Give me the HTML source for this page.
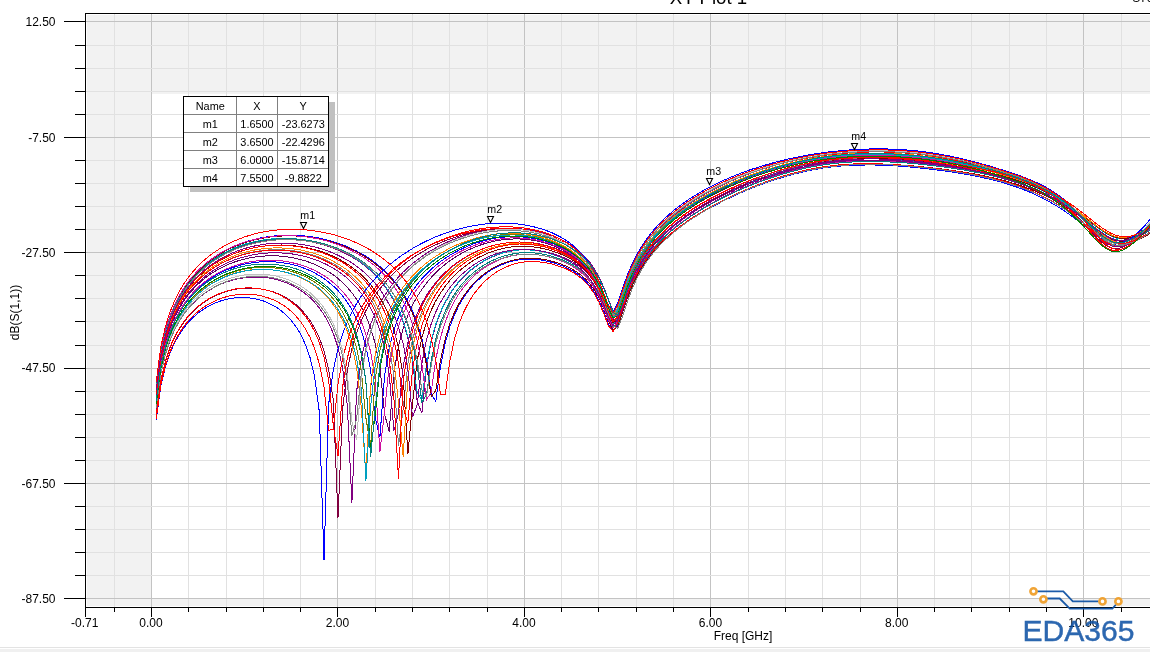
<!DOCTYPE html>
<html><head><meta charset="utf-8"><title>XY Plot 1</title>
<style>
html,body{margin:0;padding:0;background:#fff;}
body{width:1150px;height:652px;overflow:hidden;position:relative;font-family:"Liberation Sans",sans-serif;}
svg{position:absolute;left:0;top:0;display:block;will-change:transform}
svg text{font-family:"Liberation Sans",sans-serif;font-size:12px;fill:#000}
.curves polyline{fill:none;stroke-width:1;shape-rendering:crispEdges}
.mkw{will-change:transform;position:absolute;left:183px;top:96px;width:144px;height:89px;border:1px solid #000;background:#fff;box-shadow:6.5px 5.5px 0 -0.5px #c0c0c0;}
table.mk{border-collapse:collapse;font-size:10.9px;border-style:hidden;width:144px;height:89px;table-layout:fixed}
table.mk td{border:1px solid #808080;padding:0 0 0 1px;text-align:center;line-height:16px;height:17px;white-space:nowrap;overflow:visible}
</style></head><body>
<svg width="1150" height="652" viewBox="0 0 1150 652">
<rect x="0" y="0" width="1150" height="652" fill="#fff"/>
<rect x="87" y="15" width="1063" height="591" fill="#F2F2F2"/>
<rect x="152" y="94" width="998" height="504.5" fill="#fff"/>
<g shape-rendering="crispEdges">
<rect x="114" y="14" width="1" height="593" fill="#E1E1E1"/>
<rect x="151" y="14" width="1" height="593" fill="#C3C3C3"/>
<rect x="188" y="14" width="1" height="593" fill="#E1E1E1"/>
<rect x="226" y="14" width="1" height="593" fill="#E1E1E1"/>
<rect x="263" y="14" width="1" height="593" fill="#E1E1E1"/>
<rect x="300" y="14" width="1" height="593" fill="#E1E1E1"/>
<rect x="337" y="14" width="1" height="593" fill="#C3C3C3"/>
<rect x="375" y="14" width="1" height="593" fill="#E1E1E1"/>
<rect x="412" y="14" width="1" height="593" fill="#E1E1E1"/>
<rect x="449" y="14" width="1" height="593" fill="#E1E1E1"/>
<rect x="487" y="14" width="1" height="593" fill="#E1E1E1"/>
<rect x="524" y="14" width="1" height="593" fill="#C3C3C3"/>
<rect x="561" y="14" width="1" height="593" fill="#E1E1E1"/>
<rect x="598" y="14" width="1" height="593" fill="#E1E1E1"/>
<rect x="636" y="14" width="1" height="593" fill="#E1E1E1"/>
<rect x="673" y="14" width="1" height="593" fill="#E1E1E1"/>
<rect x="710" y="14" width="1" height="593" fill="#C3C3C3"/>
<rect x="748" y="14" width="1" height="593" fill="#E1E1E1"/>
<rect x="785" y="14" width="1" height="593" fill="#E1E1E1"/>
<rect x="822" y="14" width="1" height="593" fill="#E1E1E1"/>
<rect x="860" y="14" width="1" height="593" fill="#E1E1E1"/>
<rect x="897" y="14" width="1" height="593" fill="#C3C3C3"/>
<rect x="934" y="14" width="1" height="593" fill="#E1E1E1"/>
<rect x="971" y="14" width="1" height="593" fill="#E1E1E1"/>
<rect x="1009" y="14" width="1" height="593" fill="#E1E1E1"/>
<rect x="1046" y="14" width="1" height="593" fill="#E1E1E1"/>
<rect x="1083" y="14" width="1" height="593" fill="#C3C3C3"/>
<rect x="1121" y="14" width="1" height="593" fill="#E1E1E1"/>
<rect x="86" y="21" width="1065" height="1" fill="#C3C3C3"/>
<rect x="86" y="45" width="1065" height="1" fill="#E1E1E1"/>
<rect x="86" y="68" width="1065" height="1" fill="#E1E1E1"/>
<rect x="86" y="91" width="1065" height="1" fill="#E1E1E1"/>
<rect x="86" y="114" width="1065" height="1" fill="#E1E1E1"/>
<rect x="86" y="137" width="1065" height="1" fill="#C3C3C3"/>
<rect x="86" y="160" width="1065" height="1" fill="#E1E1E1"/>
<rect x="86" y="183" width="1065" height="1" fill="#E1E1E1"/>
<rect x="86" y="206" width="1065" height="1" fill="#E1E1E1"/>
<rect x="86" y="229" width="1065" height="1" fill="#E1E1E1"/>
<rect x="86" y="252" width="1065" height="1" fill="#C3C3C3"/>
<rect x="86" y="275" width="1065" height="1" fill="#E1E1E1"/>
<rect x="86" y="298" width="1065" height="1" fill="#E1E1E1"/>
<rect x="86" y="321" width="1065" height="1" fill="#E1E1E1"/>
<rect x="86" y="345" width="1065" height="1" fill="#E1E1E1"/>
<rect x="86" y="368" width="1065" height="1" fill="#C3C3C3"/>
<rect x="86" y="391" width="1065" height="1" fill="#E1E1E1"/>
<rect x="86" y="414" width="1065" height="1" fill="#E1E1E1"/>
<rect x="86" y="437" width="1065" height="1" fill="#E1E1E1"/>
<rect x="86" y="460" width="1065" height="1" fill="#E1E1E1"/>
<rect x="86" y="483" width="1065" height="1" fill="#C3C3C3"/>
<rect x="86" y="506" width="1065" height="1" fill="#E1E1E1"/>
<rect x="86" y="529" width="1065" height="1" fill="#E1E1E1"/>
<rect x="86" y="552" width="1065" height="1" fill="#E1E1E1"/>
<rect x="86" y="575" width="1065" height="1" fill="#E1E1E1"/>
<rect x="86" y="598" width="1065" height="1" fill="#C3C3C3"/>
</g>
<g class="curves">
<polyline points="156.2,400.5 160.8,365.8 165.5,345.7 170.1,331.5 174.8,320.6 179.5,311.8 184.1,304.5 188.8,298.3 193.5,293.0 198.1,288.3 202.8,284.3 207.4,280.7 212.1,277.5 216.8,274.7 221.4,272.3 226.1,270.1 230.7,268.3 235.4,266.7 240.1,265.3 244.7,264.1 249.4,263.2 254.0,262.5 258.7,262.0 263.4,261.7 268.0,261.7 272.7,261.8 277.4,262.1 282.0,262.6 286.7,263.4 291.3,264.3 296.0,265.5 300.7,267.0 305.3,268.7 310.0,270.6 314.6,272.9 319.3,275.6 324.0,278.6 328.6,282.1 333.3,286.0 338.0,290.6 342.6,295.9 347.3,302.2 351.9,309.7 356.6,318.8 361.3,330.5 365.9,346.2 370.6,369.9 375.2,418.1 379.9,437.2 384.6,375.3 389.2,348.1 393.9,330.3 398.5,317.2 403.2,306.8 407.9,298.1 412.5,290.8 417.2,284.4 421.9,278.8 426.5,273.8 431.2,269.3 435.8,265.2 440.5,261.6 445.2,258.3 449.8,255.3 454.5,252.6 459.1,250.1 463.8,247.9 468.5,245.9 473.1,244.1 477.8,242.5 482.5,241.1 487.1,239.9 491.8,238.9 496.4,238.0 501.1,237.4 505.8,236.9 510.4,236.7 515.1,236.6 519.7,236.7 524.4,237.1 529.1,237.6 533.7,238.4 538.4,239.3 543.0,240.5 547.7,241.9 552.4,243.5 557.0,245.4 561.7,247.5 566.4,250.0 571.0,252.8 575.7,256.2 580.3,260.1 585.0,264.8 589.7,270.4 594.3,277.4 599.0,286.1 603.6,296.9 608.3,309.5 613.0,318.4 617.6,313.2 622.3,299.1 627.0,285.4 631.6,273.9 636.3,264.3 640.9,256.1 645.6,249.0 650.3,242.8 654.9,237.2 659.6,232.2 664.2,227.6 668.9,223.3 673.6,219.4 678.2,215.7 682.9,212.3 687.5,209.0 692.2,206.0 696.9,203.0 701.5,200.3 706.2,197.6 710.9,195.1 715.5,192.6 720.2,190.3 724.8,188.1 729.5,185.9 734.2,183.9 738.8,181.9 743.5,180.0 748.1,178.2 752.8,176.4 757.5,174.8 762.1,173.2 766.8,171.6 771.5,170.2 776.1,168.8 780.8,167.5 785.4,166.2 790.1,165.0 794.8,163.9 799.4,162.8 804.1,161.8 808.7,160.9 813.4,160.1 818.1,159.3 822.7,158.6 827.4,157.9 832.0,157.3 836.7,156.8 841.4,156.4 846.0,156.0 850.7,155.7 855.4,155.4 860.0,155.2 864.7,155.1 869.3,155.0 874.0,155.0 878.7,155.0 883.3,155.1 888.0,155.3 892.6,155.5 897.3,155.7 902.0,156.0 906.6,156.3 911.3,156.7 916.0,157.2 920.6,157.7 925.3,158.2 929.9,158.8 934.6,159.4 939.3,160.1 943.9,160.8 948.6,161.5 953.2,162.4 957.9,163.2 962.6,164.1 967.2,165.1 971.9,166.1 976.6,167.1 981.2,168.2 985.9,169.3 990.5,170.5 995.2,171.8 999.9,173.1 1004.5,174.5 1009.2,175.9 1013.8,177.4 1018.5,178.9 1023.2,180.6 1027.8,182.3 1032.5,184.2 1037.1,186.3 1041.8,188.5 1046.5,190.9 1051.1,193.4 1055.8,196.2 1060.5,199.2 1065.1,202.5 1069.8,206.0 1074.4,209.8 1079.1,213.8 1083.8,218.0 1088.4,222.3 1093.1,226.8 1097.7,231.1 1102.4,235.0 1107.1,238.4 1111.7,241.0 1116.4,242.6 1121.1,243.1 1125.7,242.5 1130.4,241.0 1135.0,238.6 1139.7,235.4 1144.4,231.7 1149.0,227.4 1153.7,222.7 1158.3,217.9" stroke="#0000FF"/>
<polyline points="156.2,396.8 160.8,362.1 165.5,341.9 170.1,327.7 174.8,316.7 179.5,307.8 184.1,300.5 188.8,294.2 193.5,288.8 198.1,284.1 202.8,279.9 207.4,276.3 212.1,273.0 216.8,270.2 221.4,267.6 226.1,265.4 230.7,263.4 235.4,261.7 240.1,260.2 244.7,259.0 249.4,257.9 254.0,257.1 258.7,256.5 263.4,256.1 268.0,255.8 272.7,255.8 277.4,255.9 282.0,256.2 286.7,256.8 291.3,257.5 296.0,258.4 300.7,259.6 305.3,260.9 310.0,262.5 314.6,264.4 319.3,266.5 324.0,269.0 328.6,271.8 333.3,274.9 338.0,278.5 342.6,282.6 347.3,287.3 351.9,292.8 356.6,299.2 361.3,306.8 365.9,316.0 370.6,327.8 375.2,343.6 379.9,367.3 384.6,414.1 389.2,431.5 393.9,372.9 398.5,345.9 403.2,328.4 407.9,315.4 412.5,305.0 417.2,296.5 421.9,289.3 426.5,283.0 431.2,277.5 435.8,272.6 440.5,268.2 445.2,264.3 449.8,260.8 454.5,257.6 459.1,254.8 463.8,252.2 468.5,249.9 473.1,247.8 477.8,246.0 482.5,244.3 487.1,243.0 491.8,241.8 496.4,240.8 501.1,240.0 505.8,239.4 510.4,239.1 515.1,238.9 519.7,239.0 524.4,239.2 529.1,239.7 533.7,240.4 538.4,241.4 543.0,242.5 547.7,243.9 552.4,245.5 557.0,247.3 561.7,249.5 566.4,251.9 571.0,254.7 575.7,258.0 580.3,261.9 585.0,266.6 589.7,272.4 594.3,279.4 599.0,288.2 603.6,299.2 608.3,311.8 613.0,319.7 617.6,312.8 622.3,298.5 627.0,285.1 631.6,273.8 636.3,264.3 640.9,256.3 645.6,249.3 650.3,243.2 654.9,237.7 659.6,232.7 664.2,228.2 668.9,224.0 673.6,220.1 678.2,216.5 682.9,213.1 687.5,209.9 692.2,206.8 696.9,203.9 701.5,201.1 706.2,198.5 710.9,195.9 715.5,193.5 720.2,191.2 724.8,188.9 729.5,186.8 734.2,184.7 738.8,182.7 743.5,180.8 748.1,179.0 752.8,177.2 757.5,175.5 762.1,173.9 766.8,172.4 771.5,170.9 776.1,169.5 780.8,168.2 785.4,166.9 790.1,165.7 794.8,164.5 799.4,163.5 804.1,162.5 808.7,161.6 813.4,160.7 818.1,159.9 822.7,159.2 827.4,158.6 832.0,158.0 836.7,157.5 841.4,157.1 846.0,156.7 850.7,156.4 855.4,156.2 860.0,156.0 864.7,155.9 869.3,155.8 874.0,155.8 878.7,155.9 883.3,156.0 888.0,156.2 892.6,156.4 897.3,156.6 902.0,157.0 906.6,157.3 911.3,157.7 916.0,158.2 920.6,158.7 925.3,159.2 929.9,159.8 934.6,160.4 939.3,161.1 943.9,161.8 948.6,162.6 953.2,163.4 957.9,164.3 962.6,165.2 967.2,166.1 971.9,167.1 976.6,168.1 981.2,169.2 985.9,170.4 990.5,171.6 995.2,172.9 999.9,174.2 1004.5,175.6 1009.2,177.0 1013.8,178.6 1018.5,180.2 1023.2,181.9 1027.8,183.7 1032.5,185.6 1037.1,187.7 1041.8,190.0 1046.5,192.4 1051.1,195.0 1055.8,197.8 1060.5,200.9 1065.1,204.1 1069.8,207.6 1074.4,211.3 1079.1,215.2 1083.8,219.3 1088.4,223.4 1093.1,227.5 1097.7,231.4 1102.4,234.8 1107.1,237.6 1111.7,239.6 1116.4,240.6 1121.1,240.6 1125.7,239.6 1130.4,237.8 1135.0,235.3 1139.7,232.3 1144.4,228.7 1149.0,224.7 1153.7,220.3 1158.3,215.9" stroke="#600060"/>
<polyline points="156.2,408.5 160.8,374.1 165.5,354.2 170.1,340.2 174.8,329.6 179.5,321.0 184.1,314.0 188.8,308.0 193.5,302.9 198.1,298.6 202.8,294.8 207.4,291.4 212.1,288.6 216.8,286.1 221.4,283.9 226.1,282.1 230.7,280.6 235.4,279.4 240.1,278.4 244.7,277.7 249.4,277.2 254.0,277.0 258.7,277.0 263.4,277.3 268.0,277.9 272.7,278.7 277.4,279.8 282.0,281.2 286.7,282.9 291.3,284.9 296.0,287.4 300.7,290.3 305.3,293.7 310.0,297.7 314.6,302.3 319.3,307.9 324.0,314.7 328.6,322.9 333.3,333.4 338.0,347.4 342.6,367.9 347.3,405.2 351.9,502.7 356.6,391.3 361.3,358.7 365.9,338.7 370.6,324.3 375.2,312.9 379.9,303.5 384.6,295.5 389.2,288.6 393.9,282.5 398.5,277.0 403.2,272.1 407.9,267.6 412.5,263.6 417.2,259.9 421.9,256.5 426.5,253.3 431.2,250.4 435.8,247.8 440.5,245.3 445.2,243.0 449.8,241.0 454.5,239.1 459.1,237.4 463.8,235.8 468.5,234.4 473.1,233.1 477.8,232.0 482.5,231.1 487.1,230.2 491.8,229.6 496.4,229.1 501.1,228.7 505.8,228.5 510.4,228.4 515.1,228.5 519.7,228.8 524.4,229.2 529.1,229.8 533.7,230.6 538.4,231.6 543.0,232.8 547.7,234.2 552.4,235.8 557.0,237.7 561.7,239.8 566.4,242.3 571.0,245.1 575.7,248.4 580.3,252.3 585.0,256.8 589.7,262.2 594.3,268.8 599.0,276.9 603.6,286.9 608.3,299.0 613.0,310.9 617.6,312.4 622.3,300.5 627.0,286.2 631.6,273.7 636.3,263.3 640.9,254.5 645.6,247.0 650.3,240.4 654.9,234.5 659.6,229.2 664.2,224.3 668.9,219.9 673.6,215.8 678.2,212.0 682.9,208.4 687.5,205.1 692.2,201.9 696.9,199.0 701.5,196.1 706.2,193.5 710.9,190.9 715.5,188.5 720.2,186.1 724.8,183.9 729.5,181.8 734.2,179.8 738.8,177.8 743.5,176.0 748.1,174.2 752.8,172.5 757.5,170.9 762.1,169.3 766.8,167.9 771.5,166.5 776.1,165.1 780.8,163.8 785.4,162.6 790.1,161.5 794.8,160.4 799.4,159.4 804.1,158.4 808.7,157.6 813.4,156.7 818.1,156.0 822.7,155.3 827.4,154.6 832.0,154.0 836.7,153.5 841.4,153.1 846.0,152.7 850.7,152.3 855.4,152.0 860.0,151.8 864.7,151.7 869.3,151.5 874.0,151.5 878.7,151.5 883.3,151.6 888.0,151.7 892.6,151.8 897.3,152.1 902.0,152.3 906.6,152.7 911.3,153.0 916.0,153.5 920.6,154.0 925.3,154.5 929.9,155.2 934.6,155.8 939.3,156.6 943.9,157.3 948.6,158.2 953.2,159.1 957.9,160.0 962.6,161.0 967.2,162.1 971.9,163.2 976.6,164.3 981.2,165.5 985.9,166.7 990.5,168.0 995.2,169.3 999.9,170.7 1004.5,172.1 1009.2,173.6 1013.8,175.1 1018.5,176.7 1023.2,178.4 1027.8,180.2 1032.5,182.2 1037.1,184.3 1041.8,186.5 1046.5,189.0 1051.1,191.7 1055.8,194.7 1060.5,197.9 1065.1,201.4 1069.8,205.2 1074.4,209.3 1079.1,213.7 1083.8,218.3 1088.4,223.1 1093.1,228.0 1097.7,232.6 1102.4,236.8 1107.1,240.3 1111.7,242.6 1116.4,243.8 1121.1,243.7 1125.7,242.5 1130.4,240.2 1135.0,237.1 1139.7,233.2 1144.4,228.7 1149.0,223.7 1153.7,218.1 1158.3,212.4" stroke="#800080"/>
<polyline points="156.2,386.2 160.8,351.2 165.5,330.7 170.1,316.1 174.8,304.8 179.5,295.7 184.1,288.0 188.8,281.4 193.5,275.7 198.1,270.7 202.8,266.2 207.4,262.2 212.1,258.7 216.8,255.5 221.4,252.6 226.1,250.0 230.7,247.7 235.4,245.6 240.1,243.8 244.7,242.1 249.4,240.7 254.0,239.4 258.7,238.3 263.4,237.4 268.0,236.7 272.7,236.1 277.4,235.6 282.0,235.3 286.7,235.2 291.3,235.2 296.0,235.3 300.7,235.6 305.3,236.0 310.0,236.6 314.6,237.3 319.3,238.1 324.0,239.2 328.6,240.3 333.3,241.7 338.0,243.2 342.6,244.8 347.3,246.7 351.9,248.8 356.6,251.1 361.3,253.6 365.9,256.3 370.6,259.4 375.2,262.8 379.9,266.5 384.6,270.7 389.2,275.3 393.9,280.6 398.5,286.5 403.2,293.3 407.9,301.4 412.5,311.0 417.2,322.9 421.9,338.5 426.5,360.5 431.2,394.0 435.8,401.5 440.5,366.6 445.2,343.1 449.8,326.8 454.5,314.7 459.1,305.1 463.8,297.3 468.5,290.7 473.1,285.2 477.8,280.4 482.5,276.3 487.1,272.8 491.8,269.7 496.4,267.1 501.1,264.9 505.8,263.1 510.4,261.6 515.1,260.5 519.7,259.7 524.4,259.2 529.1,259.1 533.7,259.2 538.4,259.6 543.0,260.3 547.7,261.3 552.4,262.5 557.0,263.9 561.7,265.6 566.4,267.6 571.0,269.9 575.7,272.7 580.3,276.1 585.0,280.4 589.7,285.6 594.3,292.3 599.0,300.7 603.6,311.4 608.3,323.7 613.0,331.5 617.6,324.7 622.3,310.3 627.0,296.7 631.6,285.4 636.3,275.9 640.9,267.9 645.6,260.9 650.3,254.8 654.9,249.4 659.6,244.5 664.2,240.0 668.9,235.9 673.6,232.0 678.2,228.4 682.9,225.0 687.5,221.7 692.2,218.6 696.9,215.7 701.5,212.9 706.2,210.1 710.9,207.5 715.5,205.0 720.2,202.6 724.8,200.2 729.5,198.0 734.2,195.8 738.8,193.7 743.5,191.6 748.1,189.7 752.8,187.8 757.5,185.9 762.1,184.2 766.8,182.5 771.5,180.9 776.1,179.4 780.8,177.9 785.4,176.5 790.1,175.2 794.8,173.9 799.4,172.8 804.1,171.7 808.7,170.7 813.4,169.7 818.1,168.9 822.7,168.1 827.4,167.5 832.0,166.9 836.7,166.4 841.4,166.0 846.0,165.6 850.7,165.4 855.4,165.2 860.0,165.0 864.7,165.0 869.3,164.9 874.0,165.0 878.7,165.1 883.3,165.2 888.0,165.5 892.6,165.7 897.3,166.0 902.0,166.3 906.6,166.7 911.3,167.1 916.0,167.6 920.6,168.1 925.3,168.6 929.9,169.1 934.6,169.7 939.3,170.3 943.9,170.9 948.6,171.5 953.2,172.2 957.9,173.0 962.6,173.7 967.2,174.5 971.9,175.4 976.6,176.3 981.2,177.3 985.9,178.3 990.5,179.4 995.2,180.6 999.9,181.8 1004.5,183.2 1009.2,184.6 1013.8,186.1 1018.5,187.7 1023.2,189.5 1027.8,191.3 1032.5,193.3 1037.1,195.4 1041.8,197.7 1046.5,200.1 1051.1,202.7 1055.8,205.4 1060.5,208.4 1065.1,211.5 1069.8,214.7 1074.4,218.2 1079.1,221.7 1083.8,225.4 1088.4,229.1 1093.1,232.8 1097.7,236.3 1102.4,239.4 1107.1,242.1 1111.7,244.0 1116.4,245.1 1121.1,245.3 1125.7,244.7 1130.4,243.3 1135.0,241.3 1139.7,238.8 1144.4,236.0 1149.0,233.0 1153.7,229.9 1158.3,226.7" stroke="#0000FF"/>
<polyline points="156.2,387.8 160.8,352.8 165.5,332.4 170.1,317.9 174.8,306.7 179.5,297.6 184.1,290.0 188.8,283.5 193.5,277.9 198.1,272.9 202.8,268.5 207.4,264.6 212.1,261.1 216.8,258.0 221.4,255.2 226.1,252.7 230.7,250.5 235.4,248.5 240.1,246.8 244.7,245.2 249.4,243.9 254.0,242.7 258.7,241.7 263.4,240.9 268.0,240.3 272.7,239.8 277.4,239.5 282.0,239.3 286.7,239.3 291.3,239.5 296.0,239.8 300.7,240.2 305.3,240.8 310.0,241.6 314.6,242.6 319.3,243.7 324.0,245.0 328.6,246.4 333.3,248.1 338.0,250.0 342.6,252.1 347.3,254.4 351.9,257.0 356.6,259.9 361.3,263.1 365.9,266.7 370.6,270.7 375.2,275.2 379.9,280.3 384.6,286.1 389.2,292.8 393.9,300.7 398.5,310.3 403.2,322.3 407.9,338.1 412.5,361.3 417.2,401.6 421.9,413.0 426.5,367.4 431.2,342.0 435.8,325.1 440.5,312.5 445.2,302.6 449.8,294.5 454.5,287.6 459.1,281.8 463.8,276.7 468.5,272.3 473.1,268.4 477.8,265.0 482.5,262.0 487.1,259.4 491.8,257.1 496.4,255.2 501.1,253.6 505.8,252.3 510.4,251.2 515.1,250.4 519.7,249.9 524.4,249.7 529.1,249.7 533.7,250.1 538.4,250.6 543.0,251.4 547.7,252.4 552.4,253.6 557.0,255.1 561.7,256.8 566.4,258.7 571.0,261.0 575.7,263.7 580.3,267.0 585.0,270.9 589.7,275.8 594.3,281.8 599.0,289.4 603.6,299.0 608.3,310.9 613.0,322.6 617.6,324.5 622.3,312.7 627.0,298.3 631.6,285.8 636.3,275.5 640.9,266.7 645.6,259.2 650.3,252.7 654.9,246.9 659.6,241.7 664.2,237.0 668.9,232.7 673.6,228.7 678.2,224.9 682.9,221.4 687.5,218.1 692.2,214.9 696.9,211.9 701.5,209.0 706.2,206.2 710.9,203.6 715.5,201.0 720.2,198.6 724.8,196.2 729.5,193.9 734.2,191.7 738.8,189.6 743.5,187.6 748.1,185.6 752.8,183.8 757.5,181.9 762.1,180.2 766.8,178.5 771.5,176.9 776.1,175.4 780.8,174.0 785.4,172.6 790.1,171.3 794.8,170.0 799.4,168.9 804.1,167.8 808.7,166.8 813.4,165.9 818.1,165.0 822.7,164.2 827.4,163.6 832.0,163.0 836.7,162.4 841.4,162.0 846.0,161.6 850.7,161.3 855.4,161.1 860.0,160.9 864.7,160.8 869.3,160.8 874.0,160.8 878.7,160.9 883.3,161.0 888.0,161.1 892.6,161.4 897.3,161.6 902.0,161.9 906.6,162.3 911.3,162.6 916.0,163.1 920.6,163.5 925.3,164.0 929.9,164.5 934.6,165.1 939.3,165.7 943.9,166.3 948.6,166.9 953.2,167.6 957.9,168.3 962.6,169.1 967.2,169.9 971.9,170.7 976.6,171.6 981.2,172.6 985.9,173.6 990.5,174.7 995.2,175.8 999.9,177.0 1004.5,178.3 1009.2,179.6 1013.8,181.0 1018.5,182.5 1023.2,184.2 1027.8,185.9 1032.5,187.7 1037.1,189.7 1041.8,191.8 1046.5,194.0 1051.1,196.4 1055.8,198.9 1060.5,201.6 1065.1,204.5 1069.8,207.5 1074.4,210.7 1079.1,214.0 1083.8,217.4 1088.4,220.9 1093.1,224.4 1097.7,227.7 1102.4,230.8 1107.1,233.4 1111.7,235.6 1116.4,237.0 1121.1,237.8 1125.7,237.8 1130.4,237.0 1135.0,235.6 1139.7,233.6 1144.4,231.2 1149.0,228.4 1153.7,225.3 1158.3,222.1" stroke="#800080"/>
<polyline points="156.2,386.7 160.8,351.8 165.5,331.3 170.1,316.9 174.8,305.7 179.5,296.6 184.1,289.0 188.8,282.5 193.5,276.9 198.1,271.9 202.8,267.5 207.4,263.6 212.1,260.2 216.8,257.1 221.4,254.3 226.1,251.8 230.7,249.5 235.4,247.6 240.1,245.8 244.7,244.2 249.4,242.9 254.0,241.7 258.7,240.8 263.4,240.0 268.0,239.3 272.7,238.9 277.4,238.5 282.0,238.4 286.7,238.4 291.3,238.5 296.0,238.9 300.7,239.3 305.3,239.9 310.0,240.7 314.6,241.7 319.3,242.8 324.0,244.1 328.6,245.6 333.3,247.2 338.0,249.1 342.6,251.2 347.3,253.6 351.9,256.2 356.6,259.1 361.3,262.3 365.9,265.9 370.6,269.9 375.2,274.4 379.9,279.4 384.6,285.2 389.2,291.9 393.9,299.8 398.5,309.3 403.2,321.1 407.9,336.6 412.5,358.6 417.2,392.3 421.9,399.8 426.5,364.3 431.2,340.4 435.8,324.0 440.5,311.7 445.2,301.9 449.8,293.8 454.5,287.0 459.1,281.2 463.8,276.2 468.5,271.8 473.1,267.9 477.8,264.6 482.5,261.6 487.1,259.1 491.8,256.8 496.4,254.9 501.1,253.4 505.8,252.1 510.4,251.1 515.1,250.4 519.7,249.9 524.4,249.8 529.1,249.9 533.7,250.3 538.4,250.9 543.0,251.8 547.7,252.9 552.4,254.3 557.0,255.9 561.7,257.8 566.4,260.0 571.0,262.5 575.7,265.5 580.3,269.2 585.0,273.6 589.7,279.1 594.3,286.0 599.0,294.7 603.6,305.7 608.3,318.1 613.0,325.0 617.6,317.2 622.3,302.8 627.0,289.4 631.6,278.2 636.3,268.9 640.9,260.9 645.6,254.0 650.3,248.0 654.9,242.6 659.6,237.7 664.2,233.2 668.9,229.1 673.6,225.2 678.2,221.6 682.9,218.2 687.5,215.0 692.2,211.9 696.9,209.0 701.5,206.2 706.2,203.5 710.9,200.9 715.5,198.4 720.2,196.0 724.8,193.7 729.5,191.5 734.2,189.4 738.8,187.3 743.5,185.3 748.1,183.4 752.8,181.5 757.5,179.7 762.1,178.0 766.8,176.4 771.5,174.8 776.1,173.3 780.8,171.9 785.4,170.5 790.1,169.2 794.8,168.0 799.4,166.8 804.1,165.8 808.7,164.8 813.4,163.9 818.1,163.0 822.7,162.3 827.4,161.6 832.0,161.0 836.7,160.5 841.4,160.1 846.0,159.7 850.7,159.4 855.4,159.2 860.0,159.1 864.7,159.0 869.3,158.9 874.0,158.9 878.7,159.0 883.3,159.1 888.0,159.3 892.6,159.5 897.3,159.8 902.0,160.1 906.6,160.5 911.3,160.9 916.0,161.3 920.6,161.8 925.3,162.2 929.9,162.8 934.6,163.3 939.3,163.9 943.9,164.5 948.6,165.2 953.2,165.9 957.9,166.6 962.6,167.4 967.2,168.2 971.9,169.0 976.6,169.9 981.2,170.9 985.9,171.9 990.5,173.0 995.2,174.1 999.9,175.3 1004.5,176.6 1009.2,178.0 1013.8,179.4 1018.5,180.9 1023.2,182.6 1027.8,184.3 1032.5,186.2 1037.1,188.2 1041.8,190.3 1046.5,192.6 1051.1,195.0 1055.8,197.6 1060.5,200.4 1065.1,203.3 1069.8,206.4 1074.4,209.7 1079.1,213.2 1083.8,216.7 1088.4,220.4 1093.1,224.1 1097.7,227.7 1102.4,231.0 1107.1,234.0 1111.7,236.4 1116.4,238.1 1121.1,238.9 1125.7,239.0 1130.4,238.2 1135.0,236.7 1139.7,234.6 1144.4,232.0 1149.0,229.1 1153.7,225.8 1158.3,222.4" stroke="#00A0C0"/>
<polyline points="156.2,393.6 160.8,358.8 165.5,338.5 170.1,324.2 174.8,313.1 179.5,304.2 184.1,296.8 188.8,290.4 193.5,284.9 198.1,280.1 202.8,275.9 207.4,272.1 212.1,268.8 216.8,265.8 221.4,263.1 226.1,260.8 230.7,258.7 235.4,256.9 240.1,255.3 244.7,253.9 249.4,252.8 254.0,251.8 258.7,251.0 263.4,250.4 268.0,250.0 272.7,249.7 277.4,249.7 282.0,249.8 286.7,250.1 291.3,250.5 296.0,251.2 300.7,252.0 305.3,253.0 310.0,254.2 314.6,255.6 319.3,257.3 324.0,259.1 328.6,261.3 333.3,263.7 338.0,266.4 342.6,269.5 347.3,272.9 351.9,276.8 356.6,281.3 361.3,286.3 365.9,292.2 370.6,299.0 375.2,307.2 379.9,317.2 384.6,330.0 389.2,347.6 393.9,375.6 398.5,445.9 403.2,408.8 407.9,363.2 412.5,339.7 417.2,323.8 421.9,311.7 426.5,302.1 431.2,294.0 435.8,287.2 440.5,281.3 445.2,276.2 449.8,271.6 454.5,267.5 459.1,263.9 463.8,260.7 468.5,257.8 473.1,255.2 477.8,253.0 482.5,250.9 487.1,249.2 491.8,247.7 496.4,246.4 501.1,245.4 505.8,244.6 510.4,244.0 515.1,243.7 519.7,243.6 524.4,243.7 529.1,244.0 533.7,244.6 538.4,245.5 543.0,246.5 547.7,247.8 552.4,249.3 557.0,251.1 561.7,253.1 566.4,255.4 571.0,258.1 575.7,261.3 580.3,265.1 585.0,269.7 589.7,275.3 594.3,282.2 599.0,290.9 603.6,301.8 608.3,314.3 613.0,322.4 617.6,315.9 622.3,301.7 627.0,288.1 631.6,276.7 636.3,267.2 640.9,259.2 645.6,252.2 650.3,246.0 654.9,240.5 659.6,235.5 664.2,231.0 668.9,226.8 673.6,222.9 678.2,219.3 682.9,215.9 687.5,212.6 692.2,209.6 696.9,206.6 701.5,203.8 706.2,201.2 710.9,198.6 715.5,196.2 720.2,193.8 724.8,191.5 729.5,189.4 734.2,187.3 738.8,185.3 743.5,183.3 748.1,181.5 752.8,179.7 757.5,178.0 762.1,176.3 766.8,174.7 771.5,173.2 776.1,171.8 780.8,170.4 785.4,169.1 790.1,167.9 794.8,166.8 799.4,165.7 804.1,164.7 808.7,163.7 813.4,162.8 818.1,162.0 822.7,161.3 827.4,160.7 832.0,160.1 836.7,159.6 841.4,159.2 846.0,158.8 850.7,158.5 855.4,158.3 860.0,158.2 864.7,158.1 869.3,158.0 874.0,158.0 878.7,158.1 883.3,158.2 888.0,158.4 892.6,158.6 897.3,158.9 902.0,159.2 906.6,159.6 911.3,160.0 916.0,160.5 920.6,161.0 925.3,161.6 929.9,162.1 934.6,162.8 939.3,163.4 943.9,164.2 948.6,164.9 953.2,165.7 957.9,166.6 962.6,167.5 967.2,168.4 971.9,169.4 976.6,170.4 981.2,171.5 985.9,172.7 990.5,173.9 995.2,175.2 999.9,176.6 1004.5,178.0 1009.2,179.5 1013.8,181.1 1018.5,182.7 1023.2,184.5 1027.8,186.4 1032.5,188.5 1037.1,190.7 1041.8,193.0 1046.5,195.6 1051.1,198.3 1055.8,201.3 1060.5,204.5 1065.1,208.0 1069.8,211.7 1074.4,215.6 1079.1,219.7 1083.8,224.0 1088.4,228.5 1093.1,232.9 1097.7,237.0 1102.4,240.7 1107.1,243.5 1111.7,245.4 1116.4,246.2 1121.1,245.8 1125.7,244.3 1130.4,242.0 1135.0,239.1 1139.7,235.6 1144.4,231.8 1149.0,227.6 1153.7,223.2 1158.3,218.8" stroke="#808080"/>
<polyline points="156.2,415.5 160.8,381.2 165.5,361.5 170.1,347.6 174.8,337.1 179.5,328.7 184.1,321.8 188.8,316.0 193.5,311.1 198.1,306.9 202.8,303.2 207.4,300.1 212.1,297.4 216.8,295.1 221.4,293.2 226.1,291.6 230.7,290.3 235.4,289.3 240.1,288.6 244.7,288.2 249.4,288.1 254.0,288.2 258.7,288.6 263.4,289.3 268.0,290.4 272.7,291.7 277.4,293.4 282.0,295.5 286.7,298.1 291.3,301.1 296.0,304.7 300.7,309.0 305.3,314.2 310.0,320.4 314.6,328.1 319.3,337.8 324.0,350.6 328.6,369.0 333.3,400.3 338.0,517.5 342.6,408.9 347.3,370.5 351.9,348.5 356.6,332.9 361.3,320.8 365.9,310.8 370.6,302.4 375.2,295.1 379.9,288.7 384.6,283.0 389.2,277.8 393.9,273.1 398.5,268.9 403.2,264.9 407.9,261.3 412.5,258.0 417.2,254.9 421.9,252.1 426.5,249.4 431.2,247.0 435.8,244.7 440.5,242.7 445.2,240.7 449.8,239.0 454.5,237.4 459.1,235.9 463.8,234.6 468.5,233.4 473.1,232.4 477.8,231.5 482.5,230.7 487.1,230.0 491.8,229.5 496.4,229.2 501.1,228.9 505.8,228.9 510.4,228.9 515.1,229.1 519.7,229.5 524.4,230.0 529.1,230.8 533.7,231.7 538.4,232.7 543.0,234.0 547.7,235.6 552.4,237.3 557.0,239.4 561.7,241.8 566.4,244.5 571.0,247.6 575.7,251.3 580.3,255.5 585.0,260.6 589.7,266.7 594.3,274.0 599.0,283.2 603.6,294.4 608.3,307.1 613.0,314.8 617.6,307.7 622.3,293.4 627.0,279.9 631.6,268.6 636.3,259.1 640.9,251.0 645.6,243.9 650.3,237.7 654.9,232.1 659.6,227.0 664.2,222.4 668.9,218.1 673.6,214.1 678.2,210.4 682.9,207.0 687.5,203.7 692.2,200.7 696.9,197.8 701.5,195.0 706.2,192.4 710.9,189.9 715.5,187.5 720.2,185.3 724.8,183.1 729.5,181.1 734.2,179.1 738.8,177.3 743.5,175.5 748.1,173.8 752.8,172.1 757.5,170.6 762.1,169.1 766.8,167.7 771.5,166.3 776.1,165.0 780.8,163.8 785.4,162.6 790.1,161.6 794.8,160.5 799.4,159.5 804.1,158.6 808.7,157.8 813.4,157.0 818.1,156.3 822.7,155.6 827.4,155.0 832.0,154.4 836.7,153.9 841.4,153.4 846.0,153.1 850.7,152.7 855.4,152.4 860.0,152.2 864.7,152.0 869.3,151.9 874.0,151.9 878.7,151.9 883.3,151.9 888.0,152.0 892.6,152.2 897.3,152.4 902.0,152.7 906.6,153.1 911.3,153.5 916.0,153.9 920.6,154.5 925.3,155.0 929.9,155.7 934.6,156.4 939.3,157.2 943.9,158.0 948.6,158.9 953.2,159.9 957.9,160.9 962.6,161.9 967.2,163.0 971.9,164.2 976.6,165.4 981.2,166.7 985.9,168.0 990.5,169.4 995.2,170.8 999.9,172.2 1004.5,173.7 1009.2,175.2 1013.8,176.8 1018.5,178.5 1023.2,180.3 1027.8,182.1 1032.5,184.1 1037.1,186.3 1041.8,188.7 1046.5,191.3 1051.1,194.2 1055.8,197.3 1060.5,200.8 1065.1,204.5 1069.8,208.6 1074.4,213.1 1079.1,217.9 1083.8,223.0 1088.4,228.2 1093.1,233.5 1097.7,238.5 1102.4,242.8 1107.1,246.1 1111.7,248.1 1116.4,248.7 1121.1,247.8 1125.7,245.8 1130.4,242.8 1135.0,239.0 1139.7,234.6 1144.4,229.6 1149.0,224.0 1153.7,217.8 1158.3,211.7" stroke="#800040"/>
<polyline points="156.2,386.7 160.8,351.7 165.5,331.2 170.1,316.6 174.8,305.4 179.5,296.2 184.1,288.6 188.8,282.0 193.5,276.3 198.1,271.3 202.8,266.8 207.4,262.8 212.1,259.3 216.8,256.1 221.4,253.2 226.1,250.6 230.7,248.3 235.4,246.3 240.1,244.4 244.7,242.8 249.4,241.3 254.0,240.1 258.7,239.0 263.4,238.1 268.0,237.3 272.7,236.7 277.4,236.3 282.0,236.0 286.7,235.8 291.3,235.8 296.0,236.0 300.7,236.3 305.3,236.7 310.0,237.3 314.6,238.0 319.3,238.8 324.0,239.9 328.6,241.0 333.3,242.4 338.0,243.9 342.6,245.6 347.3,247.5 351.9,249.6 356.6,251.9 361.3,254.4 365.9,257.2 370.6,260.3 375.2,263.8 379.9,267.6 384.6,271.8 389.2,276.5 393.9,281.8 398.5,287.9 403.2,294.9 407.9,303.2 412.5,313.1 417.2,325.5 421.9,341.9 426.5,365.0 431.2,396.6 435.8,390.6 440.5,360.1 445.2,338.9 449.8,323.9 454.5,312.4 459.1,303.3 463.8,295.7 468.5,289.4 473.1,283.9 477.8,279.3 482.5,275.3 487.1,271.8 491.8,268.8 496.4,266.2 501.1,264.1 505.8,262.3 510.4,260.8 515.1,259.7 519.7,258.9 524.4,258.4 529.1,258.2 533.7,258.3 538.4,258.7 543.0,259.3 547.7,260.2 552.4,261.4 557.0,262.7 561.7,264.4 566.4,266.3 571.0,268.5 575.7,271.2 580.3,274.5 585.0,278.6 589.7,283.6 594.3,289.9 599.0,297.9 603.6,308.1 608.3,320.3 613.0,330.3 617.6,326.9 622.3,313.2 627.0,299.2 631.6,287.3 636.3,277.5 640.9,269.1 645.6,261.9 650.3,255.7 654.9,250.0 659.6,245.0 664.2,240.4 668.9,236.2 673.6,232.2 678.2,228.5 682.9,225.1 687.5,221.8 692.2,218.6 696.9,215.6 701.5,212.7 706.2,210.0 710.9,207.3 715.5,204.8 720.2,202.3 724.8,199.9 729.5,197.7 734.2,195.5 738.8,193.3 743.5,191.3 748.1,189.3 752.8,187.4 757.5,185.5 762.1,183.8 766.8,182.1 771.5,180.4 776.1,178.9 780.8,177.4 785.4,176.0 790.1,174.7 794.8,173.4 799.4,172.2 804.1,171.1 808.7,170.1 813.4,169.1 818.1,168.3 822.7,167.5 827.4,166.8 832.0,166.2 836.7,165.7 841.4,165.2 846.0,164.9 850.7,164.6 855.4,164.3 860.0,164.2 864.7,164.0 869.3,164.0 874.0,164.0 878.7,164.1 883.3,164.2 888.0,164.4 892.6,164.6 897.3,164.8 902.0,165.1 906.6,165.5 911.3,165.8 916.0,166.2 920.6,166.7 925.3,167.2 929.9,167.7 934.6,168.2 939.3,168.7 943.9,169.3 948.6,169.9 953.2,170.6 957.9,171.2 962.6,172.0 967.2,172.7 971.9,173.5 976.6,174.4 981.2,175.3 985.9,176.2 990.5,177.3 995.2,178.3 999.9,179.5 1004.5,180.7 1009.2,182.1 1013.8,183.4 1018.5,184.9 1023.2,186.5 1027.8,188.2 1032.5,190.0 1037.1,192.0 1041.8,194.0 1046.5,196.2 1051.1,198.6 1055.8,201.1 1060.5,203.8 1065.1,206.6 1069.8,209.6 1074.4,212.7 1079.1,216.0 1083.8,219.4 1088.4,222.9 1093.1,226.4 1097.7,229.9 1102.4,233.1 1107.1,236.1 1111.7,238.6 1116.4,240.4 1121.1,241.6 1125.7,242.0 1130.4,241.7 1135.0,240.6 1139.7,238.9 1144.4,236.8 1149.0,234.2 1153.7,231.3 1158.3,228.3" stroke="#800000"/>
<polyline points="156.2,391.1 160.8,356.2 165.5,335.9 170.1,321.5 174.8,310.3 179.5,301.4 184.1,293.8 188.8,287.4 193.5,281.8 198.1,277.0 202.8,272.7 207.4,268.8 212.1,265.4 216.8,262.4 221.4,259.7 226.1,257.3 230.7,255.1 235.4,253.2 240.1,251.5 244.7,250.1 249.4,248.8 254.0,247.7 258.7,246.9 263.4,246.2 268.0,245.6 272.7,245.3 277.4,245.1 282.0,245.0 286.7,245.2 291.3,245.5 296.0,246.0 300.7,246.6 305.3,247.4 310.0,248.4 314.6,249.6 319.3,250.9 324.0,252.5 328.6,254.3 333.3,256.3 338.0,258.6 342.6,261.2 347.3,264.0 351.9,267.2 356.6,270.8 361.3,274.8 365.9,279.4 370.6,284.6 375.2,290.6 379.9,297.6 384.6,306.0 389.2,316.2 393.9,329.3 398.5,347.4 403.2,376.4 407.9,454.3 412.5,403.6 417.2,360.4 421.9,337.6 426.5,322.0 431.2,310.2 435.8,300.8 440.5,292.9 445.2,286.3 449.8,280.5 454.5,275.5 459.1,271.1 463.8,267.2 468.5,263.7 473.1,260.7 477.8,257.9 482.5,255.6 487.1,253.5 491.8,251.7 496.4,250.1 501.1,248.9 505.8,247.8 510.4,247.1 515.1,246.5 519.7,246.2 524.4,246.2 529.1,246.4 533.7,246.9 538.4,247.6 543.0,248.5 547.7,249.7 552.4,251.1 557.0,252.7 561.7,254.5 566.4,256.7 571.0,259.2 575.7,262.1 580.3,265.7 585.0,269.9 589.7,275.2 594.3,281.6 599.0,289.8 603.6,300.0 608.3,312.3 613.0,322.7 617.6,320.3 622.3,306.9 627.0,292.9 631.6,280.9 636.3,271.0 640.9,262.6 645.6,255.4 650.3,249.0 654.9,243.4 659.6,238.3 664.2,233.6 668.9,229.4 673.6,225.4 678.2,221.7 682.9,218.2 687.5,214.9 692.2,211.8 696.9,208.8 701.5,206.0 706.2,203.3 710.9,200.6 715.5,198.1 720.2,195.7 724.8,193.4 729.5,191.2 734.2,189.1 738.8,187.0 743.5,185.0 748.1,183.1 752.8,181.2 757.5,179.5 762.1,177.8 766.8,176.2 771.5,174.6 776.1,173.1 780.8,171.7 785.4,170.4 790.1,169.1 794.8,167.9 799.4,166.8 804.1,165.7 808.7,164.7 813.4,163.8 818.1,163.0 822.7,162.2 827.4,161.6 832.0,161.0 836.7,160.4 841.4,160.0 846.0,159.6 850.7,159.3 855.4,159.1 860.0,158.9 864.7,158.8 869.3,158.7 874.0,158.7 878.7,158.7 883.3,158.8 888.0,159.0 892.6,159.2 897.3,159.4 902.0,159.7 906.6,160.1 911.3,160.4 916.0,160.9 920.6,161.3 925.3,161.8 929.9,162.3 934.6,162.9 939.3,163.5 943.9,164.1 948.6,164.8 953.2,165.5 957.9,166.3 962.6,167.1 967.2,167.9 971.9,168.8 976.6,169.7 981.2,170.7 985.9,171.7 990.5,172.8 995.2,174.0 999.9,175.2 1004.5,176.4 1009.2,177.8 1013.8,179.2 1018.5,180.7 1023.2,182.3 1027.8,184.0 1032.5,185.8 1037.1,187.7 1041.8,189.8 1046.5,192.0 1051.1,194.4 1055.8,197.0 1060.5,199.7 1065.1,202.6 1069.8,205.8 1074.4,209.0 1079.1,212.5 1083.8,216.1 1088.4,219.8 1093.1,223.5 1097.7,227.1 1102.4,230.4 1107.1,233.4 1111.7,235.8 1116.4,237.5 1121.1,238.4 1125.7,238.5 1130.4,237.7 1135.0,236.3 1139.7,234.1 1144.4,231.4 1149.0,228.3 1153.7,224.8 1158.3,221.1" stroke="#800000"/>
<polyline points="156.2,392.4 160.8,357.6 165.5,337.3 170.1,322.9 174.8,311.9 179.5,302.9 184.1,295.4 188.8,289.0 193.5,283.5 198.1,278.7 202.8,274.4 207.4,270.7 212.1,267.3 216.8,264.3 221.4,261.7 226.1,259.3 230.7,257.2 235.4,255.3 240.1,253.7 244.7,252.3 249.4,251.1 254.0,250.1 258.7,249.3 263.4,248.7 268.0,248.3 272.7,248.0 277.4,247.9 282.0,248.0 286.7,248.2 291.3,248.6 296.0,249.2 300.7,250.0 305.3,251.0 310.0,252.2 314.6,253.5 319.3,255.1 324.0,256.9 328.6,259.0 333.3,261.3 338.0,263.9 342.6,266.8 347.3,270.1 351.9,273.9 356.6,278.1 361.3,282.9 365.9,288.4 370.6,294.8 375.2,302.4 379.9,311.6 384.6,323.0 389.2,338.3 393.9,360.7 398.5,403.0 403.2,457.3 407.9,376.9 412.5,347.4 417.2,328.9 421.9,315.5 426.5,305.0 431.2,296.3 435.8,289.1 440.5,282.8 445.2,277.4 449.8,272.6 454.5,268.3 459.1,264.6 463.8,261.2 468.5,258.2 473.1,255.5 477.8,253.2 482.5,251.1 487.1,249.3 491.8,247.7 496.4,246.4 501.1,245.3 505.8,244.5 510.4,243.8 515.1,243.5 519.7,243.3 524.4,243.4 529.1,243.7 533.7,244.3 538.4,245.1 543.0,246.1 547.7,247.4 552.4,248.9 557.0,250.6 561.7,252.6 566.4,254.8 571.0,257.5 575.7,260.6 580.3,264.3 585.0,268.7 589.7,274.2 594.3,280.9 599.0,289.4 603.6,300.0 608.3,312.5 613.0,321.6 617.6,316.8 622.3,302.7 627.0,289.0 631.6,277.4 636.3,267.8 640.9,259.6 645.6,252.5 650.3,246.3 654.9,240.7 659.6,235.7 664.2,231.1 668.9,226.9 673.6,223.0 678.2,219.4 682.9,215.9 687.5,212.7 692.2,209.6 696.9,206.6 701.5,203.8 706.2,201.1 710.9,198.5 715.5,196.1 720.2,193.7 724.8,191.4 729.5,189.2 734.2,187.1 738.8,185.1 743.5,183.1 748.1,181.2 752.8,179.4 757.5,177.7 762.1,176.0 766.8,174.4 771.5,172.9 776.1,171.4 780.8,170.0 785.4,168.7 790.1,167.4 794.8,166.3 799.4,165.2 804.1,164.1 808.7,163.2 813.4,162.3 818.1,161.4 822.7,160.7 827.4,160.0 832.0,159.5 836.7,159.0 841.4,158.5 846.0,158.1 850.7,157.8 855.4,157.6 860.0,157.4 864.7,157.3 869.3,157.2 874.0,157.2 878.7,157.3 883.3,157.4 888.0,157.5 892.6,157.8 897.3,158.0 902.0,158.3 906.6,158.6 911.3,159.0 916.0,159.5 920.6,159.9 925.3,160.4 929.9,161.0 934.6,161.6 939.3,162.2 943.9,162.8 948.6,163.5 953.2,164.3 957.9,165.0 962.6,165.8 967.2,166.7 971.9,167.6 976.6,168.6 981.2,169.6 985.9,170.6 990.5,171.7 995.2,172.9 999.9,174.1 1004.5,175.4 1009.2,176.8 1013.8,178.2 1018.5,179.7 1023.2,181.3 1027.8,183.0 1032.5,184.9 1037.1,186.8 1041.8,188.9 1046.5,191.2 1051.1,193.6 1055.8,196.2 1060.5,199.0 1065.1,201.9 1069.8,205.1 1074.4,208.4 1079.1,211.9 1083.8,215.5 1088.4,219.2 1093.1,223.0 1097.7,226.6 1102.4,229.9 1107.1,232.8 1111.7,235.1 1116.4,236.7 1121.1,237.4 1125.7,237.3 1130.4,236.4 1135.0,234.8 1139.7,232.5 1144.4,229.7 1149.0,226.4 1153.7,222.7 1158.3,218.9" stroke="#FF8000"/>
<polyline points="156.2,399.7 160.8,365.1 165.5,344.9 170.1,330.7 174.8,319.8 179.5,311.0 184.1,303.7 188.8,297.5 193.5,292.1 198.1,287.4 202.8,283.3 207.4,279.7 212.1,276.6 216.8,273.7 221.4,271.3 226.1,269.1 230.7,267.2 235.4,265.5 240.1,264.1 244.7,262.9 249.4,262.0 254.0,261.2 258.7,260.7 263.4,260.3 268.0,260.2 272.7,260.2 277.4,260.5 282.0,260.9 286.7,261.6 291.3,262.5 296.0,263.6 300.7,264.9 305.3,266.5 310.0,268.3 314.6,270.4 319.3,272.9 324.0,275.7 328.6,278.8 333.3,282.5 338.0,286.7 342.6,291.5 347.3,297.1 351.9,303.7 356.6,311.7 361.3,321.5 365.9,334.2 370.6,351.7 375.2,379.7 379.9,451.7 384.6,410.8 389.2,365.7 393.9,342.1 398.5,326.0 403.2,313.9 407.9,304.0 412.5,295.8 417.2,288.8 421.9,282.7 426.5,277.3 431.2,272.5 435.8,268.2 440.5,264.4 445.2,260.9 449.8,257.7 454.5,254.8 459.1,252.2 463.8,249.9 468.5,247.8 473.1,245.9 477.8,244.2 482.5,242.7 487.1,241.5 491.8,240.4 496.4,239.5 501.1,238.8 505.8,238.3 510.4,238.0 515.1,237.9 519.7,238.0 524.4,238.3 529.1,238.8 533.7,239.5 538.4,240.5 543.0,241.6 547.7,243.0 552.4,244.6 557.0,246.5 561.7,248.6 566.4,251.0 571.0,253.9 575.7,257.2 580.3,261.1 585.0,265.8 589.7,271.5 594.3,278.5 599.0,287.2 603.6,298.1 608.3,310.7 613.0,319.3 617.6,313.5 622.3,299.3 627.0,285.7 631.6,274.2 636.3,264.6 640.9,256.5 645.6,249.4 650.3,243.2 654.9,237.6 659.6,232.6 664.2,228.0 668.9,223.8 673.6,219.9 678.2,216.2 682.9,212.7 687.5,209.5 692.2,206.4 696.9,203.5 701.5,200.7 706.2,198.0 710.9,195.5 715.5,193.1 720.2,190.7 724.8,188.5 729.5,186.3 734.2,184.3 738.8,182.3 743.5,180.4 748.1,178.6 752.8,176.8 757.5,175.2 762.1,173.6 766.8,172.0 771.5,170.6 776.1,169.2 780.8,167.8 785.4,166.6 790.1,165.4 794.8,164.2 799.4,163.2 804.1,162.2 808.7,161.3 813.4,160.4 818.1,159.6 822.7,158.9 827.4,158.2 832.0,157.7 836.7,157.1 841.4,156.7 846.0,156.3 850.7,156.0 855.4,155.7 860.0,155.5 864.7,155.4 869.3,155.3 874.0,155.3 878.7,155.3 883.3,155.4 888.0,155.6 892.6,155.7 897.3,156.0 902.0,156.3 906.6,156.6 911.3,157.0 916.0,157.4 920.6,157.9 925.3,158.4 929.9,159.0 934.6,159.6 939.3,160.3 943.9,161.0 948.6,161.8 953.2,162.6 957.9,163.4 962.6,164.3 967.2,165.3 971.9,166.3 976.6,167.3 981.2,168.4 985.9,169.5 990.5,170.7 995.2,172.0 999.9,173.3 1004.5,174.6 1009.2,176.0 1013.8,177.5 1018.5,179.1 1023.2,180.7 1027.8,182.4 1032.5,184.3 1037.1,186.3 1041.8,188.5 1046.5,190.9 1051.1,193.4 1055.8,196.2 1060.5,199.2 1065.1,202.4 1069.8,205.9 1074.4,209.6 1079.1,213.5 1083.8,217.7 1088.4,222.0 1093.1,226.3 1097.7,230.5 1102.4,234.4 1107.1,237.7 1111.7,240.3 1116.4,241.9 1121.1,242.4 1125.7,241.9 1130.4,240.4 1135.0,238.1 1139.7,235.0 1144.4,231.3 1149.0,227.2 1153.7,222.5 1158.3,217.8" stroke="#D010A0"/>
<polyline points="156.2,420.1 160.8,386.0 165.5,366.4 170.1,352.7 174.8,342.4 179.5,334.2 184.1,327.5 188.8,321.9 193.5,317.1 198.1,313.1 202.8,309.7 207.4,306.8 212.1,304.4 216.8,302.3 221.4,300.7 226.1,299.4 230.7,298.4 235.4,297.8 240.1,297.5 244.7,297.5 249.4,297.9 254.0,298.6 258.7,299.6 263.4,301.0 268.0,302.9 272.7,305.2 277.4,308.0 282.0,311.4 286.7,315.5 291.3,320.6 296.0,326.7 300.7,334.4 305.3,344.3 310.0,357.5 314.6,376.9 319.3,411.6 324.0,560.2 328.6,404.5 333.3,369.9 338.0,349.0 342.6,333.8 347.3,321.9 351.9,312.0 356.6,303.6 361.3,296.2 365.9,289.7 370.6,283.8 375.2,278.5 379.9,273.6 384.6,269.2 389.2,265.1 393.9,261.3 398.5,257.7 403.2,254.4 407.9,251.4 412.5,248.5 417.2,245.8 421.9,243.3 426.5,241.0 431.2,238.8 435.8,236.8 440.5,235.0 445.2,233.2 449.8,231.7 454.5,230.2 459.1,228.9 463.8,227.7 468.5,226.7 473.1,225.8 477.8,225.0 482.5,224.3 487.1,223.8 491.8,223.5 496.4,223.2 501.1,223.1 505.8,223.2 510.4,223.4 515.1,223.7 519.7,224.2 524.4,224.9 529.1,225.7 533.7,226.8 538.4,228.0 543.0,229.4 547.7,231.1 552.4,233.0 557.0,235.2 561.7,237.7 566.4,240.6 571.0,243.9 575.7,247.8 580.3,252.3 585.0,257.6 589.7,263.9 594.3,271.6 599.0,281.0 603.6,292.5 608.3,305.2 613.0,311.8 617.6,303.5 622.3,289.1 627.0,275.9 631.6,264.8 636.3,255.4 640.9,247.4 645.6,240.4 650.3,234.2 654.9,228.6 659.6,223.5 664.2,218.9 668.9,214.6 673.6,210.6 678.2,206.9 682.9,203.5 687.5,200.2 692.2,197.2 696.9,194.3 701.5,191.5 706.2,188.9 710.9,186.5 715.5,184.1 720.2,181.9 724.8,179.8 729.5,177.8 734.2,175.8 738.8,174.0 743.5,172.2 748.1,170.5 752.8,168.9 757.5,167.4 762.1,166.0 766.8,164.6 771.5,163.3 776.1,162.0 780.8,160.8 785.4,159.7 790.1,158.6 794.8,157.6 799.4,156.7 804.1,155.8 808.7,154.9 813.4,154.2 818.1,153.4 822.7,152.8 827.4,152.1 832.0,151.6 836.7,151.1 841.4,150.6 846.0,150.2 850.7,149.9 855.4,149.6 860.0,149.3 864.7,149.1 869.3,149.0 874.0,148.9 878.7,148.9 883.3,148.9 888.0,149.0 892.6,149.2 897.3,149.4 902.0,149.6 906.6,150.0 911.3,150.3 916.0,150.8 920.6,151.3 925.3,151.9 929.9,152.5 934.6,153.2 939.3,154.0 943.9,154.9 948.6,155.8 953.2,156.8 957.9,157.8 962.6,158.9 967.2,160.0 971.9,161.2 976.6,162.4 981.2,163.7 985.9,165.0 990.5,166.3 995.2,167.7 999.9,169.2 1004.5,170.6 1009.2,172.1 1013.8,173.7 1018.5,175.3 1023.2,177.0 1027.8,178.8 1032.5,180.7 1037.1,182.8 1041.8,185.0 1046.5,187.5 1051.1,190.3 1055.8,193.3 1060.5,196.6 1065.1,200.2 1069.8,204.1 1074.4,208.4 1079.1,213.0 1083.8,217.8 1088.4,222.8 1093.1,227.8 1097.7,232.6 1102.4,236.7 1107.1,240.0 1111.7,242.2 1116.4,243.1 1121.1,242.7 1125.7,241.2 1130.4,238.6 1135.0,235.2 1139.7,231.0 1144.4,226.1 1149.0,220.5 1153.7,214.3 1158.3,208.0" stroke="#0000FF"/>
<polyline points="156.2,385.6 160.8,350.6 165.5,330.1 170.1,315.6 174.8,304.4 179.5,295.3 184.1,287.6 188.8,281.1 193.5,275.4 198.1,270.4 202.8,266.0 207.4,262.0 212.1,258.5 216.8,255.4 221.4,252.5 226.1,250.0 230.7,247.7 235.4,245.6 240.1,243.8 244.7,242.2 249.4,240.8 254.0,239.6 258.7,238.5 263.4,237.7 268.0,237.0 272.7,236.4 277.4,236.0 282.0,235.8 286.7,235.7 291.3,235.7 296.0,235.9 300.7,236.3 305.3,236.7 310.0,237.4 314.6,238.2 319.3,239.1 324.0,240.2 328.6,241.5 333.3,243.0 338.0,244.6 342.6,246.4 347.3,248.5 351.9,250.7 356.6,253.2 361.3,256.0 365.9,259.0 370.6,262.4 375.2,266.2 379.9,270.3 384.6,275.0 389.2,280.3 393.9,286.4 398.5,293.4 403.2,301.6 407.9,311.6 412.5,324.0 417.2,340.6 421.9,364.5 426.5,399.7 431.2,392.4 435.8,359.2 440.5,337.4 445.2,322.1 449.8,310.4 454.5,301.2 459.1,293.5 463.8,287.1 468.5,281.6 473.1,276.8 477.8,272.7 482.5,269.1 487.1,266.0 491.8,263.3 496.4,261.1 501.1,259.1 505.8,257.5 510.4,256.2 515.1,255.3 519.7,254.6 524.4,254.3 529.1,254.2 533.7,254.4 538.4,254.9 543.0,255.7 547.7,256.6 552.4,257.9 557.0,259.3 561.7,261.1 566.4,263.1 571.0,265.5 575.7,268.3 580.3,271.8 585.0,276.0 589.7,281.3 594.3,287.9 599.0,296.3 603.6,306.8 608.3,319.2 613.0,327.7 617.6,321.9 622.3,307.6 627.0,293.9 631.6,282.4 636.3,272.9 640.9,264.7 645.6,257.7 650.3,251.5 654.9,246.0 659.6,241.0 664.2,236.5 668.9,232.3 673.6,228.4 678.2,224.8 682.9,221.3 687.5,218.1 692.2,215.0 696.9,212.0 701.5,209.2 706.2,206.4 710.9,203.8 715.5,201.3 720.2,198.9 724.8,196.5 729.5,194.3 734.2,192.1 738.8,190.0 743.5,188.0 748.1,186.0 752.8,184.1 757.5,182.3 762.1,180.6 766.8,178.9 771.5,177.3 776.1,175.8 780.8,174.3 785.4,172.9 790.1,171.6 794.8,170.4 799.4,169.2 804.1,168.1 808.7,167.1 813.4,166.2 818.1,165.4 822.7,164.6 827.4,163.9 832.0,163.3 836.7,162.8 841.4,162.4 846.0,162.0 850.7,161.7 855.4,161.5 860.0,161.4 864.7,161.3 869.3,161.2 874.0,161.2 878.7,161.3 883.3,161.4 888.0,161.6 892.6,161.8 897.3,162.1 902.0,162.4 906.6,162.8 911.3,163.2 916.0,163.6 920.6,164.1 925.3,164.6 929.9,165.1 934.6,165.6 939.3,166.2 943.9,166.8 948.6,167.5 953.2,168.2 957.9,168.9 962.6,169.6 967.2,170.4 971.9,171.3 976.6,172.2 981.2,173.1 985.9,174.2 990.5,175.2 995.2,176.4 999.9,177.6 1004.5,178.9 1009.2,180.2 1013.8,181.7 1018.5,183.2 1023.2,184.9 1027.8,186.7 1032.5,188.5 1037.1,190.5 1041.8,192.7 1046.5,195.0 1051.1,197.5 1055.8,200.1 1060.5,202.9 1065.1,205.8 1069.8,208.9 1074.4,212.2 1079.1,215.7 1083.8,219.2 1088.4,222.9 1093.1,226.5 1097.7,230.0 1102.4,233.2 1107.1,236.0 1111.7,238.2 1116.4,239.7 1121.1,240.4 1125.7,240.3 1130.4,239.4 1135.0,237.8 1139.7,235.6 1144.4,233.1 1149.0,230.2 1153.7,227.0 1158.3,223.7" stroke="#D010A0"/>
<polyline points="156.2,387.7 160.8,352.8 165.5,332.3 170.1,317.8 174.8,306.6 179.5,297.5 184.1,289.9 188.8,283.4 193.5,277.7 198.1,272.8 202.8,268.4 207.4,264.5 212.1,261.0 216.8,257.8 221.4,255.0 226.1,252.5 230.7,250.2 235.4,248.2 240.1,246.4 244.7,244.9 249.4,243.5 254.0,242.3 258.7,241.3 263.4,240.4 268.0,239.8 272.7,239.3 277.4,238.9 282.0,238.7 286.7,238.7 291.3,238.8 296.0,239.0 300.7,239.4 305.3,240.0 310.0,240.7 314.6,241.6 319.3,242.6 324.0,243.8 328.6,245.2 333.3,246.7 338.0,248.5 342.6,250.5 347.3,252.7 351.9,255.1 356.6,257.8 361.3,260.8 365.9,264.1 370.6,267.8 375.2,271.9 379.9,276.6 384.6,281.8 389.2,287.8 393.9,294.8 398.5,303.0 403.2,312.9 407.9,325.3 412.5,341.9 417.2,366.0 421.9,402.3 426.5,394.6 431.2,360.4 435.8,338.4 440.5,322.9 445.2,311.2 449.8,301.9 454.5,294.1 459.1,287.6 463.8,282.0 468.5,277.1 473.1,272.9 477.8,269.2 482.5,266.0 487.1,263.2 491.8,260.8 496.4,258.7 501.1,257.0 505.8,255.5 510.4,254.4 515.1,253.5 519.7,252.9 524.4,252.7 529.1,252.6 533.7,252.9 538.4,253.4 543.0,254.2 547.7,255.2 552.4,256.5 557.0,257.9 561.7,259.6 566.4,261.6 571.0,264.0 575.7,266.8 580.3,270.2 585.0,274.3 589.7,279.4 594.3,285.7 599.0,293.7 603.6,303.8 608.3,316.1 613.0,326.4 617.6,324.0 622.3,310.6 627.0,296.5 631.6,284.6 636.3,274.6 640.9,266.2 645.6,259.0 650.3,252.6 654.9,247.0 659.6,241.9 664.2,237.3 668.9,233.0 673.6,229.1 678.2,225.4 682.9,221.9 687.5,218.6 692.2,215.4 696.9,212.5 701.5,209.6 706.2,206.8 710.9,204.2 715.5,201.7 720.2,199.2 724.8,196.9 729.5,194.6 734.2,192.4 738.8,190.3 743.5,188.3 748.1,186.4 752.8,184.5 757.5,182.7 762.1,180.9 766.8,179.3 771.5,177.7 776.1,176.2 780.8,174.7 785.4,173.3 790.1,172.0 794.8,170.8 799.4,169.6 804.1,168.5 808.7,167.5 813.4,166.6 818.1,165.8 822.7,165.0 827.4,164.3 832.0,163.7 836.7,163.2 841.4,162.8 846.0,162.4 850.7,162.1 855.4,161.8 860.0,161.7 864.7,161.6 869.3,161.5 874.0,161.5 878.7,161.6 883.3,161.7 888.0,161.9 892.6,162.1 897.3,162.4 902.0,162.7 906.6,163.0 911.3,163.4 916.0,163.8 920.6,164.3 925.3,164.8 929.9,165.3 934.6,165.8 939.3,166.4 943.9,167.0 948.6,167.7 953.2,168.4 957.9,169.1 962.6,169.8 967.2,170.6 971.9,171.5 976.6,172.4 981.2,173.3 985.9,174.4 990.5,175.4 995.2,176.6 999.9,177.8 1004.5,179.0 1009.2,180.4 1013.8,181.8 1018.5,183.3 1023.2,185.0 1027.8,186.7 1032.5,188.6 1037.1,190.5 1041.8,192.7 1046.5,194.9 1051.1,197.3 1055.8,199.9 1060.5,202.7 1065.1,205.6 1069.8,208.7 1074.4,212.0 1079.1,215.4 1083.8,219.0 1088.4,222.6 1093.1,226.2 1097.7,229.7 1102.4,233.0 1107.1,235.9 1111.7,238.2 1116.4,239.8 1121.1,240.7 1125.7,240.7 1130.4,239.9 1135.0,238.4 1139.7,236.3 1144.4,233.8 1149.0,230.8 1153.7,227.6 1158.3,224.2" stroke="#008080"/>
<polyline points="156.2,403.7 160.8,369.2 165.5,349.1 170.1,335.0 174.8,324.2 179.5,315.5 184.1,308.2 188.8,302.1 193.5,296.9 198.1,292.3 202.8,288.3 207.4,284.8 212.1,281.7 216.8,279.1 221.4,276.7 226.1,274.7 230.7,272.9 235.4,271.4 240.1,270.1 244.7,269.1 249.4,268.3 254.0,267.8 258.7,267.4 263.4,267.3 268.0,267.4 272.7,267.7 277.4,268.3 282.0,269.0 286.7,270.0 291.3,271.3 296.0,272.8 300.7,274.6 305.3,276.7 310.0,279.2 314.6,282.1 319.3,285.4 324.0,289.2 328.6,293.6 333.3,298.8 338.0,304.9 342.6,312.2 347.3,321.1 351.9,332.6 356.6,348.0 361.3,371.2 365.9,417.8 370.6,445.8 375.2,378.9 379.9,350.8 384.6,332.7 389.2,319.4 393.9,308.7 398.5,299.9 403.2,292.4 407.9,285.9 412.5,280.2 417.2,275.1 421.9,270.5 426.5,266.3 431.2,262.5 435.8,259.1 440.5,256.0 445.2,253.1 449.8,250.5 454.5,248.1 459.1,246.0 463.8,244.0 468.5,242.2 473.1,240.7 477.8,239.3 482.5,238.1 487.1,237.0 491.8,236.2 496.4,235.5 501.1,234.9 505.8,234.6 510.4,234.4 515.1,234.4 519.7,234.6 524.4,235.0 529.1,235.6 533.7,236.4 538.4,237.4 543.0,238.6 547.7,240.0 552.4,241.7 557.0,243.6 561.7,245.8 566.4,248.3 571.0,251.2 575.7,254.5 580.3,258.5 585.0,263.2 589.7,268.9 594.3,275.9 599.0,284.5 603.6,295.3 608.3,307.9 613.0,317.2 617.6,312.5 622.3,298.6 627.0,284.8 631.6,273.2 636.3,263.5 640.9,255.3 645.6,248.1 650.3,241.9 654.9,236.2 659.6,231.2 664.2,226.6 668.9,222.3 673.6,218.3 678.2,214.7 682.9,211.2 687.5,207.9 692.2,204.9 696.9,201.9 701.5,199.1 706.2,196.5 710.9,194.0 715.5,191.5 720.2,189.2 724.8,187.0 729.5,184.9 734.2,182.8 738.8,180.9 743.5,179.0 748.1,177.2 752.8,175.5 757.5,173.9 762.1,172.3 766.8,170.8 771.5,169.3 776.1,168.0 780.8,166.7 785.4,165.4 790.1,164.2 794.8,163.1 799.4,162.1 804.1,161.1 808.7,160.2 813.4,159.4 818.1,158.6 822.7,157.9 827.4,157.2 832.0,156.7 836.7,156.2 841.4,155.7 846.0,155.3 850.7,155.0 855.4,154.8 860.0,154.6 864.7,154.4 869.3,154.3 874.0,154.3 878.7,154.3 883.3,154.4 888.0,154.5 892.6,154.7 897.3,155.0 902.0,155.2 906.6,155.6 911.3,156.0 916.0,156.4 920.6,156.9 925.3,157.4 929.9,158.0 934.6,158.7 939.3,159.4 943.9,160.1 948.6,160.9 953.2,161.7 957.9,162.6 962.6,163.6 967.2,164.5 971.9,165.6 976.6,166.7 981.2,167.8 985.9,169.0 990.5,170.2 995.2,171.5 999.9,172.8 1004.5,174.2 1009.2,175.6 1013.8,177.1 1018.5,178.7 1023.2,180.4 1027.8,182.1 1032.5,184.0 1037.1,186.1 1041.8,188.3 1046.5,190.7 1051.1,193.3 1055.8,196.2 1060.5,199.3 1065.1,202.6 1069.8,206.2 1074.4,210.1 1079.1,214.2 1083.8,218.6 1088.4,223.1 1093.1,227.7 1097.7,232.1 1102.4,236.1 1107.1,239.6 1111.7,242.1 1116.4,243.6 1121.1,243.9 1125.7,243.1 1130.4,241.3 1135.0,238.7 1139.7,235.3 1144.4,231.3 1149.0,226.7 1153.7,221.7 1158.3,216.7" stroke="#808000"/>
<polyline points="156.2,404.6 160.8,370.1 165.5,350.1 170.1,336.0 174.8,325.2 179.5,316.6 184.1,309.4 188.8,303.3 193.5,298.1 198.1,293.5 202.8,289.6 207.4,286.1 212.1,283.1 216.8,280.5 221.4,278.2 226.1,276.2 230.7,274.4 235.4,273.0 240.1,271.8 244.7,270.9 249.4,270.1 254.0,269.6 258.7,269.4 263.4,269.3 268.0,269.5 272.7,269.9 277.4,270.6 282.0,271.4 286.7,272.6 291.3,274.0 296.0,275.7 300.7,277.7 305.3,280.0 310.0,282.8 314.6,285.9 319.3,289.6 324.0,293.9 328.6,298.8 333.3,304.7 338.0,311.7 342.6,320.4 347.3,331.3 351.9,345.8 356.6,367.3 361.3,407.5 365.9,474.8 370.6,385.5 375.2,354.7 379.9,335.6 384.6,321.6 389.2,310.5 393.9,301.4 398.5,293.7 403.2,287.0 407.9,281.1 412.5,275.9 417.2,271.2 421.9,266.9 426.5,263.0 431.2,259.5 435.8,256.3 440.5,253.3 445.2,250.7 449.8,248.2 454.5,245.9 459.1,243.9 463.8,242.1 468.5,240.4 473.1,238.9 477.8,237.6 482.5,236.5 487.1,235.5 491.8,234.7 496.4,234.0 501.1,233.6 505.8,233.3 510.4,233.1 515.1,233.2 519.7,233.4 524.4,233.8 529.1,234.4 533.7,235.3 538.4,236.3 543.0,237.5 547.7,239.0 552.4,240.7 557.0,242.6 561.7,244.8 566.4,247.4 571.0,250.4 575.7,253.8 580.3,257.9 585.0,262.7 589.7,268.5 594.3,275.7 599.0,284.5 603.6,295.5 608.3,308.2 613.0,316.5 617.6,310.4 622.3,296.1 627.0,282.6 631.6,271.2 636.3,261.6 640.9,253.5 645.6,246.4 650.3,240.2 654.9,234.6 659.6,229.6 664.2,225.0 668.9,220.8 673.6,216.8 678.2,213.2 682.9,209.7 687.5,206.5 692.2,203.4 696.9,200.5 701.5,197.7 706.2,195.1 710.9,192.6 715.5,190.1 720.2,187.8 724.8,185.6 729.5,183.5 734.2,181.5 738.8,179.6 743.5,177.7 748.1,175.9 752.8,174.2 757.5,172.6 762.1,171.0 766.8,169.5 771.5,168.1 776.1,166.7 780.8,165.4 785.4,164.2 790.1,163.1 794.8,162.0 799.4,160.9 804.1,160.0 808.7,159.1 813.4,158.2 818.1,157.4 822.7,156.7 827.4,156.1 832.0,155.5 836.7,155.0 841.4,154.6 846.0,154.2 850.7,153.9 855.4,153.6 860.0,153.4 864.7,153.2 869.3,153.1 874.0,153.1 878.7,153.1 883.3,153.2 888.0,153.3 892.6,153.5 897.3,153.7 902.0,154.0 906.6,154.3 911.3,154.7 916.0,155.2 920.6,155.7 925.3,156.2 929.9,156.8 934.6,157.4 939.3,158.1 943.9,158.9 948.6,159.7 953.2,160.5 957.9,161.4 962.6,162.3 967.2,163.3 971.9,164.4 976.6,165.4 981.2,166.6 985.9,167.7 990.5,169.0 995.2,170.2 999.9,171.6 1004.5,172.9 1009.2,174.4 1013.8,175.9 1018.5,177.4 1023.2,179.0 1027.8,180.8 1032.5,182.7 1037.1,184.7 1041.8,186.9 1046.5,189.3 1051.1,191.9 1055.8,194.7 1060.5,197.7 1065.1,201.0 1069.8,204.6 1074.4,208.4 1079.1,212.5 1083.8,216.8 1088.4,221.3 1093.1,225.9 1097.7,230.3 1102.4,234.4 1107.1,237.9 1111.7,240.5 1116.4,242.1 1121.1,242.5 1125.7,241.9 1130.4,240.2 1135.0,237.6 1139.7,234.3 1144.4,230.3 1149.0,225.7 1153.7,220.7 1158.3,215.5" stroke="#FF8000"/>
<polyline points="156.2,405.2 160.8,370.7 165.5,350.6 170.1,336.5 174.8,325.8 179.5,317.1 184.1,309.9 188.8,303.8 193.5,298.6 198.1,294.0 202.8,290.1 207.4,286.6 212.1,283.5 216.8,280.9 221.4,278.5 226.1,276.5 230.7,274.8 235.4,273.3 240.1,272.1 244.7,271.1 249.4,270.4 254.0,269.8 258.7,269.5 263.4,269.5 268.0,269.6 272.7,270.0 277.4,270.6 282.0,271.4 286.7,272.5 291.3,273.8 296.0,275.4 300.7,277.3 305.3,279.6 310.0,282.2 314.6,285.2 319.3,288.7 324.0,292.7 328.6,297.4 333.3,302.9 338.0,309.5 342.6,317.5 347.3,327.4 351.9,340.3 356.6,358.5 361.3,388.5 365.9,480.6 370.6,406.3 375.2,365.6 379.9,343.2 384.6,327.5 389.2,315.5 393.9,305.8 398.5,297.6 403.2,290.6 407.9,284.4 412.5,278.9 417.2,274.1 421.9,269.6 426.5,265.6 431.2,262.0 435.8,258.7 440.5,255.7 445.2,252.9 449.8,250.4 454.5,248.1 459.1,246.0 463.8,244.1 468.5,242.4 473.1,240.9 477.8,239.6 482.5,238.4 487.1,237.4 491.8,236.6 496.4,235.9 501.1,235.4 505.8,235.1 510.4,235.0 515.1,235.0 519.7,235.2 524.4,235.6 529.1,236.2 533.7,237.0 538.4,238.1 543.0,239.3 547.7,240.8 552.4,242.5 557.0,244.4 561.7,246.7 566.4,249.3 571.0,252.2 575.7,255.7 580.3,259.8 585.0,264.7 589.7,270.7 594.3,277.9 599.0,286.9 603.6,298.2 608.3,310.8 613.0,318.1 617.6,310.7 622.3,296.3 627.0,282.9 631.6,271.7 636.3,262.3 640.9,254.2 645.6,247.3 650.3,241.1 654.9,235.6 659.6,230.6 664.2,226.0 668.9,221.8 673.6,217.9 678.2,214.2 682.9,210.8 687.5,207.6 692.2,204.5 696.9,201.6 701.5,198.8 706.2,196.2 710.9,193.7 715.5,191.3 720.2,189.0 724.8,186.8 729.5,184.7 734.2,182.7 738.8,180.7 743.5,178.9 748.1,177.1 752.8,175.4 757.5,173.8 762.1,172.2 766.8,170.7 771.5,169.3 776.1,167.9 780.8,166.7 785.4,165.4 790.1,164.3 794.8,163.2 799.4,162.2 804.1,161.2 808.7,160.3 813.4,159.5 818.1,158.7 822.7,158.0 827.4,157.4 832.0,156.8 836.7,156.3 841.4,155.8 846.0,155.5 850.7,155.1 855.4,154.9 860.0,154.7 864.7,154.5 869.3,154.4 874.0,154.4 878.7,154.4 883.3,154.5 888.0,154.6 892.6,154.8 897.3,155.1 902.0,155.4 906.6,155.7 911.3,156.1 916.0,156.5 920.6,157.0 925.3,157.6 929.9,158.2 934.6,158.8 939.3,159.5 943.9,160.3 948.6,161.1 953.2,162.0 957.9,162.9 962.6,163.8 967.2,164.8 971.9,165.9 976.6,167.0 981.2,168.1 985.9,169.3 990.5,170.6 995.2,171.9 999.9,173.3 1004.5,174.7 1009.2,176.1 1013.8,177.7 1018.5,179.2 1023.2,180.9 1027.8,182.7 1032.5,184.7 1037.1,186.8 1041.8,189.0 1046.5,191.5 1051.1,194.2 1055.8,197.1 1060.5,200.3 1065.1,203.7 1069.8,207.4 1074.4,211.4 1079.1,215.7 1083.8,220.3 1088.4,225.0 1093.1,229.7 1097.7,234.3 1102.4,238.5 1107.1,242.0 1111.7,244.5 1116.4,245.9 1121.1,246.0 1125.7,245.0 1130.4,242.9 1135.0,239.9 1139.7,236.3 1144.4,232.0 1149.0,227.2 1153.7,222.0 1158.3,216.7" stroke="#00A0C0"/>
<polyline points="156.2,419.2 160.8,385.0 165.5,365.3 170.1,351.6 174.8,341.2 179.5,332.8 184.1,326.0 188.8,320.3 193.5,315.5 198.1,311.4 202.8,307.8 207.4,304.8 212.1,302.3 216.8,300.1 221.4,298.3 226.1,296.8 230.7,295.7 235.4,294.9 240.1,294.4 244.7,294.2 249.4,294.2 254.0,294.6 258.7,295.3 263.4,296.4 268.0,297.8 272.7,299.5 277.4,301.7 282.0,304.4 286.7,307.6 291.3,311.5 296.0,316.1 300.7,321.8 305.3,328.6 310.0,337.3 314.6,348.4 319.3,363.7 324.0,387.1 328.6,430.4 333.3,429.3 338.0,384.0 342.6,358.5 347.3,341.1 351.9,327.9 356.6,317.2 361.3,308.2 365.9,300.4 370.6,293.6 375.2,287.5 379.9,282.0 384.6,277.1 389.2,272.6 393.9,268.4 398.5,264.6 403.2,261.1 407.9,257.8 412.5,254.8 417.2,252.0 421.9,249.4 426.5,247.0 431.2,244.8 435.8,242.7 440.5,240.8 445.2,239.0 449.8,237.4 454.5,235.9 459.1,234.6 463.8,233.4 468.5,232.3 473.1,231.3 477.8,230.5 482.5,229.8 487.1,229.3 491.8,228.8 496.4,228.5 501.1,228.3 505.8,228.3 510.4,228.4 515.1,228.7 519.7,229.1 524.4,229.6 529.1,230.4 533.7,231.3 538.4,232.4 543.0,233.7 547.7,235.3 552.4,237.1 557.0,239.1 561.7,241.5 566.4,244.3 571.0,247.5 575.7,251.2 580.3,255.5 585.0,260.7 589.7,266.8 594.3,274.3 599.0,283.5 603.6,294.9 608.3,307.6 613.0,314.8 617.6,307.2 622.3,292.8 627.0,279.5 631.6,268.2 636.3,258.8 640.9,250.7 645.6,243.6 650.3,237.4 654.9,231.8 659.6,226.7 664.2,222.1 668.9,217.8 673.6,213.8 678.2,210.1 682.9,206.7 687.5,203.4 692.2,200.4 696.9,197.5 701.5,194.7 706.2,192.1 710.9,189.6 715.5,187.3 720.2,185.0 724.8,182.9 729.5,180.9 734.2,178.9 738.8,177.1 743.5,175.3 748.1,173.6 752.8,172.0 757.5,170.5 762.1,169.0 766.8,167.6 771.5,166.3 776.1,165.0 780.8,163.8 785.4,162.6 790.1,161.6 794.8,160.5 799.4,159.6 804.1,158.7 808.7,157.8 813.4,157.1 818.1,156.3 822.7,155.7 827.4,155.0 832.0,154.5 836.7,154.0 841.4,153.5 846.0,153.1 850.7,152.8 855.4,152.5 860.0,152.3 864.7,152.1 869.3,152.0 874.0,151.9 878.7,151.9 883.3,152.0 888.0,152.1 892.6,152.2 897.3,152.4 902.0,152.7 906.6,153.1 911.3,153.5 916.0,153.9 920.6,154.5 925.3,155.0 929.9,155.7 934.6,156.4 939.3,157.2 943.9,158.1 948.6,159.0 953.2,159.9 957.9,161.0 962.6,162.1 967.2,163.2 971.9,164.4 976.6,165.6 981.2,166.9 985.9,168.2 990.5,169.6 995.2,171.0 999.9,172.5 1004.5,174.0 1009.2,175.6 1013.8,177.2 1018.5,178.8 1023.2,180.6 1027.8,182.5 1032.5,184.5 1037.1,186.7 1041.8,189.1 1046.5,191.7 1051.1,194.6 1055.8,197.8 1060.5,201.3 1065.1,205.2 1069.8,209.4 1074.4,213.9 1079.1,218.9 1083.8,224.1 1088.4,229.6 1093.1,235.1 1097.7,240.2 1102.4,244.7 1107.1,248.1 1111.7,250.1 1116.4,250.6 1121.1,249.6 1125.7,247.4 1130.4,244.2 1135.0,240.3 1139.7,235.6 1144.4,230.4 1149.0,224.6 1153.7,218.2 1158.3,211.9" stroke="#FF0000"/>
<polyline points="156.2,395.8 160.8,361.1 165.5,340.8 170.1,326.5 174.8,315.5 179.5,306.6 184.1,299.1 188.8,292.8 193.5,287.3 198.1,282.6 202.8,278.3 207.4,274.6 212.1,271.3 216.8,268.4 221.4,265.8 226.1,263.4 230.7,261.4 235.4,259.6 240.1,258.0 244.7,256.7 249.4,255.6 254.0,254.6 258.7,253.9 263.4,253.3 268.0,253.0 272.7,252.8 277.4,252.8 282.0,253.0 286.7,253.3 291.3,253.8 296.0,254.6 300.7,255.5 305.3,256.6 310.0,257.9 314.6,259.5 319.3,261.2 324.0,263.3 328.6,265.6 333.3,268.2 338.0,271.2 342.6,274.5 347.3,278.3 351.9,282.7 356.6,287.6 361.3,293.3 365.9,300.0 370.6,308.0 375.2,317.8 379.9,330.2 384.6,347.2 389.2,373.6 393.9,430.9 398.5,413.3 403.2,366.3 407.9,342.0 412.5,325.7 417.2,313.4 421.9,303.6 426.5,295.4 431.2,288.4 435.8,282.4 440.5,277.1 445.2,272.4 449.8,268.3 454.5,264.5 459.1,261.2 463.8,258.2 468.5,255.5 473.1,253.1 477.8,250.9 482.5,249.0 487.1,247.4 491.8,245.9 496.4,244.7 501.1,243.8 505.8,243.0 510.4,242.4 515.1,242.1 519.7,242.0 524.4,242.1 529.1,242.4 533.7,242.9 538.4,243.7 543.0,244.7 547.7,245.9 552.4,247.3 557.0,248.9 561.7,250.8 566.4,252.9 571.0,255.4 575.7,258.3 580.3,261.7 585.0,265.9 589.7,270.9 594.3,277.0 599.0,284.6 603.6,294.1 608.3,305.9 613.0,318.1 617.6,321.6 622.3,310.8 627.0,296.4 631.6,283.7 636.3,273.1 640.9,264.2 645.6,256.5 650.3,249.9 654.9,244.0 659.6,238.7 664.2,233.9 668.9,229.5 673.6,225.4 678.2,221.6 682.9,218.0 687.5,214.7 692.2,211.5 696.9,208.5 701.5,205.6 706.2,202.9 710.9,200.3 715.5,197.7 720.2,195.3 724.8,193.0 729.5,190.8 734.2,188.7 738.8,186.7 743.5,184.7 748.1,182.8 752.8,181.0 757.5,179.3 762.1,177.6 766.8,176.0 771.5,174.5 776.1,173.0 780.8,171.6 785.4,170.3 790.1,169.1 794.8,167.9 799.4,166.8 804.1,165.8 808.7,164.8 813.4,164.0 818.1,163.2 822.7,162.4 827.4,161.8 832.0,161.2 836.7,160.7 841.4,160.2 846.0,159.9 850.7,159.5 855.4,159.3 860.0,159.1 864.7,159.0 869.3,158.9 874.0,158.9 878.7,159.0 883.3,159.1 888.0,159.3 892.6,159.5 897.3,159.7 902.0,160.0 906.6,160.4 911.3,160.8 916.0,161.2 920.6,161.7 925.3,162.3 929.9,162.9 934.6,163.5 939.3,164.1 943.9,164.9 948.6,165.6 953.2,166.4 957.9,167.3 962.6,168.1 967.2,169.1 971.9,170.1 976.6,171.1 981.2,172.2 985.9,173.4 990.5,174.6 995.2,175.8 999.9,177.2 1004.5,178.6 1009.2,180.1 1013.8,181.6 1018.5,183.2 1023.2,185.0 1027.8,186.9 1032.5,188.9 1037.1,191.0 1041.8,193.3 1046.5,195.8 1051.1,198.5 1055.8,201.5 1060.5,204.6 1065.1,208.0 1069.8,211.7 1074.4,215.6 1079.1,219.7 1083.8,224.0 1088.4,228.4 1093.1,232.8 1097.7,237.0 1102.4,240.8 1107.1,243.8 1111.7,245.9 1116.4,246.9 1121.1,246.7 1125.7,245.5 1130.4,243.4 1135.0,240.5 1139.7,237.1 1144.4,233.3 1149.0,229.1 1153.7,224.6 1158.3,220.1" stroke="#800080"/>
<polyline points="156.2,406.5 160.8,372.1 165.5,352.1 170.1,338.2 174.8,327.5 179.5,318.9 184.1,311.8 188.8,305.8 193.5,300.7 198.1,296.3 202.8,292.4 207.4,289.1 212.1,286.2 216.8,283.7 221.4,281.5 226.1,279.6 230.7,278.0 235.4,276.8 240.1,275.7 244.7,274.9 249.4,274.4 254.0,274.1 258.7,274.1 263.4,274.3 268.0,274.7 272.7,275.4 277.4,276.4 282.0,277.7 286.7,279.2 291.3,281.1 296.0,283.3 300.7,286.0 305.3,289.0 310.0,292.7 314.6,296.9 319.3,301.9 324.0,307.8 328.6,315.0 333.3,323.8 338.0,335.1 342.6,350.5 347.3,374.0 351.9,421.6 356.6,440.2 361.3,378.5 365.9,351.0 370.6,333.0 375.2,319.6 379.9,308.9 384.6,300.0 389.2,292.4 393.9,285.8 398.5,279.9 403.2,274.6 407.9,269.9 412.5,265.6 417.2,261.7 421.9,258.1 426.5,254.9 431.2,251.8 435.8,249.1 440.5,246.5 445.2,244.2 449.8,242.0 454.5,240.1 459.1,238.3 463.8,236.7 468.5,235.3 473.1,234.0 477.8,232.8 482.5,231.9 487.1,231.0 491.8,230.4 496.4,229.9 501.1,229.5 505.8,229.3 510.4,229.3 515.1,229.4 519.7,229.7 524.4,230.2 529.1,230.9 533.7,231.7 538.4,232.8 543.0,234.1 547.7,235.6 552.4,237.3 557.0,239.4 561.7,241.7 566.4,244.3 571.0,247.4 575.7,250.9 580.3,255.1 585.0,260.1 589.7,266.1 594.3,273.4 599.0,282.5 603.6,293.8 608.3,306.5 613.0,313.8 617.6,306.3 622.3,291.9 627.0,278.5 631.6,267.3 636.3,257.9 640.9,249.9 645.6,242.9 650.3,236.7 654.9,231.2 659.6,226.2 664.2,221.6 668.9,217.4 673.6,213.5 678.2,209.8 682.9,206.4 687.5,203.1 692.2,200.1 696.9,197.2 701.5,194.4 706.2,191.8 710.9,189.3 715.5,186.9 720.2,184.7 724.8,182.5 729.5,180.4 734.2,178.4 738.8,176.5 743.5,174.7 748.1,172.9 752.8,171.3 757.5,169.7 762.1,168.1 766.8,166.7 771.5,165.3 776.1,163.9 780.8,162.7 785.4,161.5 790.1,160.3 794.8,159.3 799.4,158.3 804.1,157.3 808.7,156.4 813.4,155.6 818.1,154.9 822.7,154.2 827.4,153.6 832.0,153.0 836.7,152.5 841.4,152.0 846.0,151.7 850.7,151.3 855.4,151.1 860.0,150.9 864.7,150.7 869.3,150.6 874.0,150.6 878.7,150.6 883.3,150.7 888.0,150.8 892.6,151.0 897.3,151.2 902.0,151.5 906.6,151.9 911.3,152.2 916.0,152.7 920.6,153.2 925.3,153.8 929.9,154.4 934.6,155.1 939.3,155.8 943.9,156.6 948.6,157.4 953.2,158.3 957.9,159.2 962.6,160.2 967.2,161.3 971.9,162.4 976.6,163.5 981.2,164.7 985.9,165.9 990.5,167.2 995.2,168.5 999.9,169.9 1004.5,171.4 1009.2,172.8 1013.8,174.4 1018.5,176.0 1023.2,177.7 1027.8,179.5 1032.5,181.5 1037.1,183.6 1041.8,185.9 1046.5,188.4 1051.1,191.1 1055.8,194.1 1060.5,197.4 1065.1,200.9 1069.8,204.7 1074.4,208.9 1079.1,213.3 1083.8,218.0 1088.4,222.9 1093.1,227.8 1097.7,232.5 1102.4,236.8 1107.1,240.3 1111.7,242.7 1116.4,243.9 1121.1,243.8 1125.7,242.4 1130.4,240.1 1135.0,236.9 1139.7,233.0 1144.4,228.5 1149.0,223.4 1153.7,217.9 1158.3,212.3" stroke="#C0C0C0"/>
<polyline points="156.2,393.7 160.8,358.9 165.5,338.6 170.1,324.3 174.8,313.3 179.5,304.3 184.1,296.9 188.8,290.5 193.5,285.1 198.1,280.3 202.8,276.0 207.4,272.3 212.1,269.0 216.8,266.0 221.4,263.4 226.1,261.1 230.7,259.0 235.4,257.2 240.1,255.6 244.7,254.3 249.4,253.1 254.0,252.2 258.7,251.4 263.4,250.8 268.0,250.4 272.7,250.2 277.4,250.2 282.0,250.3 286.7,250.7 291.3,251.2 296.0,251.8 300.7,252.7 305.3,253.8 310.0,255.1 314.6,256.6 319.3,258.3 324.0,260.2 328.6,262.5 333.3,265.0 338.0,267.9 342.6,271.1 347.3,274.7 351.9,278.8 356.6,283.5 361.3,288.9 365.9,295.2 370.6,302.6 375.2,311.6 379.9,322.8 384.6,337.6 389.2,359.1 393.9,398.3 398.5,478.7 403.2,381.0 407.9,349.9 412.5,330.8 417.2,317.0 421.9,306.2 426.5,297.4 431.2,290.0 435.8,283.6 440.5,278.1 445.2,273.2 449.8,268.8 454.5,265.0 459.1,261.5 463.8,258.4 468.5,255.6 473.1,253.2 477.8,251.0 482.5,249.0 487.1,247.4 491.8,245.9 496.4,244.7 501.1,243.7 505.8,243.0 510.4,242.4 515.1,242.1 519.7,242.0 524.4,242.1 529.1,242.5 533.7,243.1 538.4,244.0 543.0,245.0 547.7,246.3 552.4,247.8 557.0,249.5 561.7,251.6 566.4,253.9 571.0,256.5 575.7,259.7 580.3,263.4 585.0,267.9 589.7,273.3 594.3,280.1 599.0,288.5 603.6,299.1 608.3,311.6 613.0,321.0 617.6,316.5 622.3,302.6 627.0,288.8 631.6,277.2 636.3,267.5 640.9,259.3 645.6,252.2 650.3,245.9 654.9,240.4 659.6,235.3 664.2,230.8 668.9,226.5 673.6,222.6 678.2,219.0 682.9,215.5 687.5,212.3 692.2,209.2 696.9,206.2 701.5,203.4 706.2,200.8 710.9,198.2 715.5,195.7 720.2,193.4 724.8,191.1 729.5,188.9 734.2,186.8 738.8,184.8 743.5,182.9 748.1,181.0 752.8,179.2 757.5,177.5 762.1,175.9 766.8,174.3 771.5,172.8 776.1,171.3 780.8,170.0 785.4,168.7 790.1,167.4 794.8,166.3 799.4,165.2 804.1,164.2 808.7,163.2 813.4,162.4 818.1,161.6 822.7,160.9 827.4,160.2 832.0,159.7 836.7,159.2 841.4,158.7 846.0,158.4 850.7,158.1 855.4,157.9 860.0,157.7 864.7,157.6 869.3,157.6 874.0,157.6 878.7,157.7 883.3,157.8 888.0,158.0 892.6,158.2 897.3,158.5 902.0,158.8 906.6,159.2 911.3,159.6 916.0,160.1 920.6,160.6 925.3,161.1 929.9,161.7 934.6,162.3 939.3,163.0 943.9,163.7 948.6,164.5 953.2,165.3 957.9,166.1 962.6,167.0 967.2,168.0 971.9,169.0 976.6,170.0 981.2,171.1 985.9,172.3 990.5,173.5 995.2,174.8 999.9,176.2 1004.5,177.6 1009.2,179.1 1013.8,180.7 1018.5,182.3 1023.2,184.1 1027.8,186.0 1032.5,188.1 1037.1,190.3 1041.8,192.6 1046.5,195.2 1051.1,197.9 1055.8,200.9 1060.5,204.1 1065.1,207.6 1069.8,211.2 1074.4,215.1 1079.1,219.3 1083.8,223.6 1088.4,228.0 1093.1,232.3 1097.7,236.4 1102.4,240.0 1107.1,242.8 1111.7,244.7 1116.4,245.4 1121.1,244.9 1125.7,243.5 1130.4,241.2 1135.0,238.2 1139.7,234.8 1144.4,231.0 1149.0,226.9 1153.7,222.5 1158.3,218.1" stroke="#FF0000"/>
<polyline points="156.2,390.7 160.8,355.8 165.5,335.5 170.1,321.1 174.8,310.0 179.5,301.0 184.1,293.5 188.8,287.1 193.5,281.5 198.1,276.7 202.8,272.4 207.4,268.6 212.1,265.2 216.8,262.2 221.4,259.5 226.1,257.1 230.7,255.0 235.4,253.1 240.1,251.4 244.7,250.0 249.4,248.8 254.0,247.7 258.7,246.9 263.4,246.2 268.0,245.7 272.7,245.4 277.4,245.2 282.0,245.3 286.7,245.4 291.3,245.8 296.0,246.3 300.7,247.0 305.3,247.9 310.0,249.0 314.6,250.2 319.3,251.7 324.0,253.4 328.6,255.3 333.3,257.4 338.0,259.8 342.6,262.5 347.3,265.6 351.9,269.0 356.6,272.8 361.3,277.2 365.9,282.1 370.6,287.8 375.2,294.4 379.9,302.2 384.6,311.7 389.2,323.6 393.9,339.5 398.5,363.1 403.2,407.7 407.9,422.7 412.5,369.1 417.2,342.8 421.9,325.5 426.5,312.7 431.2,302.6 435.8,294.2 440.5,287.2 445.2,281.1 449.8,275.9 454.5,271.2 459.1,267.1 463.8,263.5 468.5,260.2 473.1,257.3 477.8,254.8 482.5,252.6 487.1,250.6 491.8,248.9 496.4,247.5 501.1,246.3 505.8,245.4 510.4,244.7 515.1,244.2 519.7,244.0 524.4,244.1 529.1,244.3 533.7,244.9 538.4,245.6 543.0,246.6 547.7,247.8 552.4,249.3 557.0,251.0 561.7,252.9 566.4,255.1 571.0,257.7 575.7,260.8 580.3,264.4 585.0,268.8 589.7,274.2 594.3,280.9 599.0,289.3 603.6,299.9 608.3,312.3 613.0,321.6 617.6,317.1 622.3,303.1 627.0,289.3 631.6,277.7 636.3,268.0 640.9,259.8 645.6,252.7 650.3,246.4 654.9,240.9 659.6,235.9 664.2,231.3 668.9,227.1 673.6,223.2 678.2,219.5 682.9,216.1 687.5,212.8 692.2,209.7 696.9,206.8 701.5,203.9 706.2,201.2 710.9,198.7 715.5,196.2 720.2,193.8 724.8,191.5 729.5,189.3 734.2,187.2 738.8,185.1 743.5,183.1 748.1,181.2 752.8,179.4 757.5,177.6 762.1,176.0 766.8,174.3 771.5,172.8 776.1,171.3 780.8,169.9 785.4,168.6 790.1,167.3 794.8,166.1 799.4,165.0 804.1,163.9 808.7,163.0 813.4,162.1 818.1,161.2 822.7,160.5 827.4,159.8 832.0,159.2 836.7,158.7 841.4,158.3 846.0,157.9 850.7,157.6 855.4,157.3 860.0,157.2 864.7,157.0 869.3,157.0 874.0,157.0 878.7,157.0 883.3,157.1 888.0,157.3 892.6,157.5 897.3,157.7 902.0,158.0 906.6,158.3 911.3,158.7 916.0,159.1 920.6,159.6 925.3,160.1 929.9,160.6 934.6,161.2 939.3,161.8 943.9,162.4 948.6,163.1 953.2,163.8 957.9,164.5 962.6,165.3 967.2,166.1 971.9,167.0 976.6,167.9 981.2,168.9 985.9,169.9 990.5,171.0 995.2,172.1 999.9,173.3 1004.5,174.6 1009.2,175.9 1013.8,177.3 1018.5,178.8 1023.2,180.3 1027.8,182.0 1032.5,183.8 1037.1,185.7 1041.8,187.8 1046.5,190.0 1051.1,192.3 1055.8,194.8 1060.5,197.5 1065.1,200.4 1069.8,203.5 1074.4,206.7 1079.1,210.1 1083.8,213.7 1088.4,217.4 1093.1,221.1 1097.7,224.7 1102.4,228.1 1107.1,231.1 1111.7,233.6 1116.4,235.5 1121.1,236.5 1125.7,236.8 1130.4,236.2 1135.0,234.9 1139.7,232.9 1144.4,230.4 1149.0,227.3 1153.7,223.8 1158.3,220.2" stroke="#FF0000"/>
<polyline points="156.2,408.4 160.8,374.0 165.5,354.1 170.1,340.1 174.8,329.4 179.5,320.9 184.1,313.8 188.8,307.9 193.5,302.7 198.1,298.3 202.8,294.5 207.4,291.2 212.1,288.3 216.8,285.8 221.4,283.6 226.1,281.8 230.7,280.2 235.4,278.9 240.1,277.9 244.7,277.2 249.4,276.6 254.0,276.4 258.7,276.3 263.4,276.6 268.0,277.0 272.7,277.8 277.4,278.8 282.0,280.1 286.7,281.7 291.3,283.6 296.0,285.9 300.7,288.6 305.3,291.7 310.0,295.4 314.6,299.8 319.3,304.9 324.0,311.0 328.6,318.4 333.3,327.7 338.0,339.6 342.6,356.0 347.3,381.6 351.9,435.6 356.6,419.1 361.3,373.0 365.9,348.4 370.6,331.7 375.2,319.0 379.9,308.7 384.6,300.1 389.2,292.7 393.9,286.2 398.5,280.5 403.2,275.3 407.9,270.7 412.5,266.5 417.2,262.6 421.9,259.1 426.5,255.8 431.2,252.9 435.8,250.1 440.5,247.6 445.2,245.3 449.8,243.2 454.5,241.2 459.1,239.5 463.8,237.9 468.5,236.5 473.1,235.2 477.8,234.1 482.5,233.1 487.1,232.3 491.8,231.6 496.4,231.1 501.1,230.7 505.8,230.5 510.4,230.5 515.1,230.6 519.7,230.9 524.4,231.4 529.1,232.0 533.7,232.9 538.4,233.9 543.0,235.2 547.7,236.7 552.4,238.4 557.0,240.4 561.7,242.7 566.4,245.3 571.0,248.4 575.7,251.9 580.3,256.1 585.0,261.0 589.7,267.0 594.3,274.2 599.0,283.2 603.6,294.4 608.3,307.0 613.0,315.0 617.6,308.2 622.3,293.9 627.0,280.4 631.6,269.1 636.3,259.6 640.9,251.5 645.6,244.4 650.3,238.2 654.9,232.6 659.6,227.5 664.2,222.9 668.9,218.6 673.6,214.7 678.2,211.0 682.9,207.5 687.5,204.3 692.2,201.2 696.9,198.3 701.5,195.5 706.2,192.9 710.9,190.4 715.5,188.0 720.2,185.7 724.8,183.5 729.5,181.5 734.2,179.5 738.8,177.6 743.5,175.7 748.1,174.0 752.8,172.3 757.5,170.7 762.1,169.2 766.8,167.7 771.5,166.3 776.1,165.0 780.8,163.7 785.4,162.5 790.1,161.4 794.8,160.3 799.4,159.3 804.1,158.4 808.7,157.5 813.4,156.7 818.1,155.9 822.7,155.2 827.4,154.6 832.0,154.0 836.7,153.5 841.4,153.1 846.0,152.7 850.7,152.3 855.4,152.1 860.0,151.8 864.7,151.7 869.3,151.6 874.0,151.5 878.7,151.5 883.3,151.6 888.0,151.7 892.6,151.9 897.3,152.1 902.0,152.4 906.6,152.7 911.3,153.1 916.0,153.5 920.6,154.0 925.3,154.6 929.9,155.2 934.6,155.8 939.3,156.6 943.9,157.4 948.6,158.2 953.2,159.1 957.9,160.0 962.6,161.0 967.2,162.1 971.9,163.1 976.6,164.3 981.2,165.5 985.9,166.7 990.5,168.0 995.2,169.3 999.9,170.7 1004.5,172.1 1009.2,173.6 1013.8,175.1 1018.5,176.7 1023.2,178.4 1027.8,180.2 1032.5,182.1 1037.1,184.2 1041.8,186.4 1046.5,188.9 1051.1,191.6 1055.8,194.6 1060.5,197.8 1065.1,201.3 1069.8,205.1 1074.4,209.3 1079.1,213.7 1083.8,218.4 1088.4,223.4 1093.1,228.4 1097.7,233.3 1102.4,237.7 1107.1,241.4 1111.7,244.1 1116.4,245.5 1121.1,245.6 1125.7,244.5 1130.4,242.2 1135.0,239.0 1139.7,235.1 1144.4,230.5 1149.0,225.4 1153.7,219.7 1158.3,214.0" stroke="#808080"/>
<polyline points="156.2,381.9 160.8,346.9 165.5,326.3 170.1,311.7 174.8,300.3 179.5,291.1 184.1,283.4 188.8,276.8 193.5,271.0 198.1,265.9 202.8,261.4 207.4,257.4 212.1,253.8 216.8,250.6 221.4,247.6 226.1,245.0 230.7,242.6 235.4,240.5 240.1,238.6 244.7,236.9 249.4,235.4 254.0,234.1 258.7,232.9 263.4,232.0 268.0,231.1 272.7,230.5 277.4,230.0 282.0,229.6 286.7,229.4 291.3,229.3 296.0,229.3 300.7,229.5 305.3,229.8 310.0,230.3 314.6,230.9 319.3,231.6 324.0,232.5 328.6,233.5 333.3,234.6 338.0,235.9 342.6,237.4 347.3,239.0 351.9,240.9 356.6,242.9 361.3,245.1 365.9,247.5 370.6,250.1 375.2,253.0 379.9,256.2 384.6,259.7 389.2,263.6 393.9,267.9 398.5,272.7 403.2,278.0 407.9,284.1 412.5,291.2 417.2,299.4 421.9,309.3 426.5,321.6 431.2,337.7 435.8,360.5 440.5,394.3 445.2,394.5 449.8,361.4 454.5,339.1 459.1,323.6 463.8,311.9 468.5,302.7 473.1,295.2 477.8,289.0 482.5,283.7 487.1,279.2 491.8,275.4 496.4,272.1 501.1,269.4 505.8,267.1 510.4,265.2 515.1,263.8 519.7,262.7 524.4,262.0 529.1,261.6 533.7,261.5 538.4,261.8 543.0,262.3 547.7,263.1 552.4,264.2 557.0,265.6 561.7,267.2 566.4,269.0 571.0,271.3 575.7,274.1 580.3,277.5 585.0,281.7 589.7,287.0 594.3,293.7 599.0,302.3 603.6,313.2 608.3,325.4 613.0,331.6 617.6,323.0 622.3,308.4 627.0,295.1 631.6,284.0 636.3,274.7 640.9,266.8 645.6,259.9 650.3,253.9 654.9,248.5 659.6,243.6 664.2,239.2 668.9,235.1 673.6,231.3 678.2,227.7 682.9,224.3 687.5,221.0 692.2,217.9 696.9,215.0 701.5,212.1 706.2,209.4 710.9,206.8 715.5,204.3 720.2,201.8 724.8,199.5 729.5,197.2 734.2,195.0 738.8,192.8 743.5,190.8 748.1,188.8 752.8,186.9 757.5,185.0 762.1,183.2 766.8,181.5 771.5,179.9 776.1,178.3 780.8,176.9 785.4,175.4 790.1,174.1 794.8,172.8 799.4,171.6 804.1,170.5 808.7,169.5 813.4,168.6 818.1,167.7 822.7,166.9 827.4,166.3 832.0,165.7 836.7,165.2 841.4,164.7 846.0,164.4 850.7,164.1 855.4,163.9 860.0,163.8 864.7,163.7 869.3,163.7 874.0,163.8 878.7,163.9 883.3,164.0 888.0,164.2 892.6,164.5 897.3,164.8 902.0,165.1 906.6,165.5 911.3,165.9 916.0,166.3 920.6,166.8 925.3,167.3 929.9,167.8 934.6,168.4 939.3,168.9 943.9,169.5 948.6,170.2 953.2,170.8 957.9,171.5 962.6,172.2 967.2,173.0 971.9,173.8 976.6,174.7 981.2,175.7 985.9,176.7 990.5,177.7 995.2,178.9 999.9,180.1 1004.5,181.4 1009.2,182.8 1013.8,184.3 1018.5,185.9 1023.2,187.6 1027.8,189.5 1032.5,191.4 1037.1,193.5 1041.8,195.8 1046.5,198.1 1051.1,200.7 1055.8,203.4 1060.5,206.2 1065.1,209.3 1069.8,212.5 1074.4,215.8 1079.1,219.3 1083.8,222.9 1088.4,226.6 1093.1,230.2 1097.7,233.7 1102.4,236.9 1107.1,239.6 1111.7,241.7 1116.4,243.1 1121.1,243.5 1125.7,243.2 1130.4,242.0 1135.0,240.3 1139.7,238.0 1144.4,235.4 1149.0,232.6 1153.7,229.7 1158.3,226.7" stroke="#FF0000"/>
<polyline points="156.2,389.1 160.8,354.1 165.5,333.6 170.1,319.1 174.8,307.9 179.5,298.8 184.1,291.1 188.8,284.6 193.5,279.0 198.1,274.0 202.8,269.6 207.4,265.6 212.1,262.1 216.8,259.0 221.4,256.2 226.1,253.6 230.7,251.4 235.4,249.3 240.1,247.5 244.7,246.0 249.4,244.6 254.0,243.4 258.7,242.4 263.4,241.5 268.0,240.8 272.7,240.3 277.4,239.9 282.0,239.7 286.7,239.7 291.3,239.8 296.0,240.0 300.7,240.4 305.3,240.9 310.0,241.6 314.6,242.5 319.3,243.5 324.0,244.7 328.6,246.0 333.3,247.6 338.0,249.3 342.6,251.3 347.3,253.4 351.9,255.8 356.6,258.5 361.3,261.4 365.9,264.6 370.6,268.3 375.2,272.3 379.9,276.8 384.6,282.0 389.2,287.8 393.9,294.5 398.5,302.4 403.2,311.8 407.9,323.6 412.5,338.8 417.2,360.0 421.9,390.2 426.5,396.2 431.2,365.5 435.8,342.7 440.5,326.6 445.2,314.5 449.8,304.8 454.5,296.8 459.1,290.1 463.8,284.3 468.5,279.4 473.1,275.0 477.8,271.3 482.5,268.0 487.1,265.1 491.8,262.6 496.4,260.5 501.1,258.7 505.8,257.2 510.4,256.0 515.1,255.1 519.7,254.5 524.4,254.2 529.1,254.1 533.7,254.4 538.4,254.9 543.0,255.6 547.7,256.5 552.4,257.7 557.0,259.1 561.7,260.7 566.4,262.6 571.0,264.8 575.7,267.5 580.3,270.6 585.0,274.5 589.7,279.2 594.3,285.2 599.0,292.6 603.6,302.1 608.3,313.8 613.0,325.8 617.6,328.4 622.3,317.1 627.0,302.7 631.6,290.1 636.3,279.6 640.9,270.8 645.6,263.2 650.3,256.7 654.9,250.9 659.6,245.6 664.2,240.9 668.9,236.6 673.6,232.6 678.2,228.8 682.9,225.2 687.5,221.9 692.2,218.7 696.9,215.7 701.5,212.8 706.2,210.0 710.9,207.3 715.5,204.8 720.2,202.3 724.8,199.9 729.5,197.7 734.2,195.5 738.8,193.3 743.5,191.3 748.1,189.3 752.8,187.4 757.5,185.6 762.1,183.8 766.8,182.1 771.5,180.5 776.1,179.0 780.8,177.5 785.4,176.1 790.1,174.8 794.8,173.6 799.4,172.4 804.1,171.3 808.7,170.3 813.4,169.4 818.1,168.5 822.7,167.8 827.4,167.1 832.0,166.5 836.7,166.0 841.4,165.5 846.0,165.2 850.7,164.9 855.4,164.6 860.0,164.5 864.7,164.4 869.3,164.4 874.0,164.4 878.7,164.5 883.3,164.6 888.0,164.8 892.6,165.0 897.3,165.3 902.0,165.6 906.6,165.9 911.3,166.3 916.0,166.8 920.6,167.2 925.3,167.7 929.9,168.3 934.6,168.8 939.3,169.4 943.9,170.0 948.6,170.7 953.2,171.4 957.9,172.1 962.6,172.9 967.2,173.7 971.9,174.5 976.6,175.4 981.2,176.4 985.9,177.4 990.5,178.5 995.2,179.7 999.9,180.9 1004.5,182.2 1009.2,183.6 1013.8,185.1 1018.5,186.6 1023.2,188.3 1027.8,190.1 1032.5,192.0 1037.1,194.0 1041.8,196.2 1046.5,198.6 1051.1,201.1 1055.8,203.7 1060.5,206.6 1065.1,209.6 1069.8,212.8 1074.4,216.1 1079.1,219.6 1083.8,223.3 1088.4,226.9 1093.1,230.6 1097.7,234.2 1102.4,237.4 1107.1,240.2 1111.7,242.4 1116.4,243.8 1121.1,244.3 1125.7,244.0 1130.4,242.9 1135.0,241.2 1139.7,238.9 1144.4,236.2 1149.0,233.1 1153.7,229.9 1158.3,226.5" stroke="#808080"/>
<polyline points="156.2,414.8 160.8,380.5 165.5,360.7 170.1,346.9 174.8,336.4 179.5,328.1 184.1,321.2 188.8,315.4 193.5,310.5 198.1,306.3 202.8,302.7 207.4,299.6 212.1,296.9 216.8,294.7 221.4,292.8 226.1,291.2 230.7,290.0 235.4,289.0 240.1,288.4 244.7,288.0 249.4,287.9 254.0,288.1 258.7,288.6 263.4,289.4 268.0,290.5 272.7,292.0 277.4,293.8 282.0,296.1 286.7,298.8 291.3,302.1 296.0,305.9 300.7,310.6 305.3,316.1 310.0,322.9 314.6,331.4 319.3,342.3 324.0,357.2 328.6,379.8 333.3,425.4 338.0,455.8 342.6,387.1 347.3,358.4 351.9,339.8 356.6,326.0 361.3,315.0 365.9,305.8 370.6,297.9 375.2,291.0 379.9,284.9 384.6,279.4 389.2,274.4 393.9,269.9 398.5,265.7 403.2,261.9 407.9,258.4 412.5,255.2 417.2,252.2 421.9,249.4 426.5,246.9 431.2,244.5 435.8,242.3 440.5,240.2 445.2,238.4 449.8,236.6 454.5,235.1 459.1,233.6 463.8,232.3 468.5,231.2 473.1,230.2 477.8,229.3 482.5,228.5 487.1,227.9 491.8,227.4 496.4,227.1 501.1,226.9 505.8,226.8 510.4,226.9 515.1,227.1 519.7,227.5 524.4,228.1 529.1,228.8 533.7,229.7 538.4,230.8 543.0,232.1 547.7,233.7 552.4,235.4 557.0,237.5 561.7,239.9 566.4,242.6 571.0,245.7 575.7,249.4 580.3,253.7 585.0,258.8 589.7,264.8 594.3,272.3 599.0,281.4 603.6,292.7 608.3,305.4 613.0,313.0 617.6,305.7 622.3,291.4 627.0,278.0 631.6,266.7 636.3,257.2 640.9,249.1 645.6,242.1 650.3,235.8 654.9,230.2 659.6,225.1 664.2,220.5 668.9,216.2 673.6,212.3 678.2,208.6 682.9,205.1 687.5,201.9 692.2,198.8 696.9,195.9 701.5,193.2 706.2,190.5 710.9,188.1 715.5,185.7 720.2,183.4 724.8,181.3 729.5,179.2 734.2,177.3 738.8,175.4 743.5,173.6 748.1,171.9 752.8,170.3 757.5,168.7 762.1,167.2 766.8,165.8 771.5,164.4 776.1,163.2 780.8,161.9 785.4,160.8 790.1,159.7 794.8,158.6 799.4,157.7 804.1,156.7 808.7,155.9 813.4,155.1 818.1,154.3 822.7,153.7 827.4,153.0 832.0,152.5 836.7,152.0 841.4,151.5 846.0,151.1 850.7,150.8 855.4,150.5 860.0,150.2 864.7,150.1 869.3,150.0 874.0,149.9 878.7,149.9 883.3,149.9 888.0,150.0 892.6,150.2 897.3,150.4 902.0,150.7 906.6,151.0 911.3,151.4 916.0,151.8 920.6,152.3 925.3,152.9 929.9,153.5 934.6,154.2 939.3,155.0 943.9,155.8 948.6,156.7 953.2,157.6 957.9,158.6 962.6,159.6 967.2,160.7 971.9,161.9 976.6,163.1 981.2,164.3 985.9,165.6 990.5,166.9 995.2,168.3 999.9,169.7 1004.5,171.1 1009.2,172.6 1013.8,174.2 1018.5,175.8 1023.2,177.5 1027.8,179.3 1032.5,181.3 1037.1,183.4 1041.8,185.7 1046.5,188.3 1051.1,191.1 1055.8,194.2 1060.5,197.5 1065.1,201.3 1069.8,205.3 1074.4,209.8 1079.1,214.6 1083.8,219.7 1088.4,225.2 1093.1,230.7 1097.7,236.2 1102.4,241.1 1107.1,245.3 1111.7,248.2 1116.4,249.5 1121.1,249.4 1125.7,247.7 1130.4,244.9 1135.0,241.2 1139.7,236.7 1144.4,231.5 1149.0,225.8 1153.7,219.5 1158.3,213.2" stroke="#FF0000"/>
<polyline points="156.2,390.2 160.8,355.3 165.5,334.9 170.1,320.5 174.8,309.3 179.5,300.3 184.1,292.7 188.8,286.3 193.5,280.7 198.1,275.8 202.8,271.4 207.4,267.6 212.1,264.1 216.8,261.1 221.4,258.3 226.1,255.9 230.7,253.7 235.4,251.7 240.1,250.0 244.7,248.5 249.4,247.2 254.0,246.1 258.7,245.2 263.4,244.4 268.0,243.8 272.7,243.4 277.4,243.2 282.0,243.1 286.7,243.1 291.3,243.4 296.0,243.8 300.7,244.3 305.3,245.0 310.0,245.9 314.6,247.0 319.3,248.2 324.0,249.6 328.6,251.3 333.3,253.1 338.0,255.2 342.6,257.5 347.3,260.1 351.9,262.9 356.6,266.2 361.3,269.8 365.9,273.8 370.6,278.3 375.2,283.5 379.9,289.4 384.6,296.3 389.2,304.5 393.9,314.4 398.5,327.0 403.2,343.9 407.9,369.6 412.5,417.0 417.2,404.7 421.9,363.2 426.5,339.8 431.2,323.9 435.8,311.9 440.5,302.3 445.2,294.4 449.8,287.7 454.5,282.0 459.1,277.0 463.8,272.6 468.5,268.7 473.1,265.3 477.8,262.3 482.5,259.7 487.1,257.4 491.8,255.4 496.4,253.7 501.1,252.3 505.8,251.2 510.4,250.3 515.1,249.7 519.7,249.3 524.4,249.2 529.1,249.4 533.7,249.8 538.4,250.5 543.0,251.4 547.7,252.5 552.4,253.9 557.0,255.6 561.7,257.4 566.4,259.6 571.0,262.2 575.7,265.2 580.3,268.8 585.0,273.2 589.7,278.6 594.3,285.3 599.0,293.8 603.6,304.5 608.3,317.0 613.0,325.5 617.6,319.7 622.3,305.4 627.0,291.8 631.6,280.3 636.3,270.7 640.9,262.6 645.6,255.6 650.3,249.4 654.9,243.9 659.6,238.9 664.2,234.4 668.9,230.2 673.6,226.3 678.2,222.6 682.9,219.2 687.5,215.9 692.2,212.8 696.9,209.9 701.5,207.1 706.2,204.4 710.9,201.8 715.5,199.3 720.2,196.9 724.8,194.6 729.5,192.4 734.2,190.2 738.8,188.2 743.5,186.2 748.1,184.3 752.8,182.4 757.5,180.7 762.1,179.0 766.8,177.3 771.5,175.8 776.1,174.3 780.8,172.9 785.4,171.5 790.1,170.3 794.8,169.1 799.4,167.9 804.1,166.9 808.7,165.9 813.4,165.0 818.1,164.2 822.7,163.4 827.4,162.7 832.0,162.2 836.7,161.6 841.4,161.2 846.0,160.8 850.7,160.5 855.4,160.3 860.0,160.1 864.7,160.0 869.3,160.0 874.0,160.0 878.7,160.1 883.3,160.2 888.0,160.3 892.6,160.6 897.3,160.8 902.0,161.1 906.6,161.5 911.3,161.9 916.0,162.3 920.6,162.8 925.3,163.3 929.9,163.8 934.6,164.4 939.3,165.0 943.9,165.7 948.6,166.3 953.2,167.1 957.9,167.8 962.6,168.6 967.2,169.5 971.9,170.3 976.6,171.3 981.2,172.3 985.9,173.3 990.5,174.4 995.2,175.6 999.9,176.9 1004.5,178.2 1009.2,179.5 1013.8,181.0 1018.5,182.5 1023.2,184.2 1027.8,185.9 1032.5,187.8 1037.1,189.8 1041.8,192.0 1046.5,194.3 1051.1,196.8 1055.8,199.4 1060.5,202.2 1065.1,205.2 1069.8,208.4 1074.4,211.8 1079.1,215.4 1083.8,219.0 1088.4,222.8 1093.1,226.5 1097.7,230.1 1102.4,233.4 1107.1,236.3 1111.7,238.5 1116.4,240.0 1121.1,240.6 1125.7,240.3 1130.4,239.2 1135.0,237.4 1139.7,235.1 1144.4,232.2 1149.0,229.0 1153.7,225.4 1158.3,221.8" stroke="#800080"/>
<polyline points="156.2,403.6 160.8,369.0 165.5,348.9 170.1,334.8 174.8,324.0 179.5,315.2 184.1,308.0 188.8,301.9 193.5,296.6 198.1,292.0 202.8,288.0 207.4,284.5 212.1,281.4 216.8,278.6 221.4,276.2 226.1,274.2 230.7,272.4 235.4,270.8 240.1,269.5 244.7,268.5 249.4,267.6 254.0,267.0 258.7,266.6 263.4,266.4 268.0,266.5 272.7,266.7 277.4,267.1 282.0,267.8 286.7,268.7 291.3,269.9 296.0,271.3 300.7,272.9 305.3,274.9 310.0,277.2 314.6,279.8 319.3,282.9 324.0,286.4 328.6,290.4 333.3,295.1 338.0,300.6 342.6,307.0 347.3,314.8 351.9,324.5 356.6,337.0 361.3,354.2 365.9,381.8 370.6,451.5 375.2,414.8 379.9,368.7 384.6,344.8 389.2,328.6 393.9,316.2 398.5,306.3 403.2,298.0 407.9,290.8 412.5,284.6 417.2,279.1 421.9,274.2 426.5,269.8 431.2,265.8 435.8,262.2 440.5,258.9 445.2,255.9 449.8,253.1 454.5,250.6 459.1,248.4 463.8,246.3 468.5,244.5 473.1,242.8 477.8,241.4 482.5,240.1 487.1,239.0 491.8,238.1 496.4,237.3 501.1,236.7 505.8,236.3 510.4,236.1 515.1,236.1 519.7,236.2 524.4,236.6 529.1,237.1 533.7,237.8 538.4,238.8 543.0,240.0 547.7,241.3 552.4,242.9 557.0,244.8 561.7,246.9 566.4,249.4 571.0,252.2 575.7,255.5 580.3,259.3 585.0,263.9 589.7,269.4 594.3,276.2 599.0,284.6 603.6,295.1 608.3,307.5 613.0,318.0 617.6,315.5 622.3,302.0 627.0,288.0 631.6,276.1 636.3,266.2 640.9,257.8 645.6,250.5 650.3,244.1 654.9,238.4 659.6,233.3 664.2,228.6 668.9,224.3 673.6,220.3 678.2,216.6 682.9,213.1 687.5,209.8 692.2,206.7 696.9,203.7 701.5,200.9 706.2,198.3 710.9,195.7 715.5,193.3 720.2,191.0 724.8,188.7 729.5,186.6 734.2,184.5 738.8,182.6 743.5,180.7 748.1,178.9 752.8,177.2 757.5,175.5 762.1,173.9 766.8,172.4 771.5,171.0 776.1,169.6 780.8,168.3 785.4,167.1 790.1,165.9 794.8,164.8 799.4,163.8 804.1,162.8 808.7,161.9 813.4,161.0 818.1,160.3 822.7,159.6 827.4,158.9 832.0,158.4 836.7,157.9 841.4,157.4 846.0,157.1 850.7,156.8 855.4,156.5 860.0,156.3 864.7,156.2 869.3,156.1 874.0,156.1 878.7,156.1 883.3,156.2 888.0,156.4 892.6,156.6 897.3,156.8 902.0,157.1 906.6,157.5 911.3,157.9 916.0,158.4 920.6,158.9 925.3,159.5 929.9,160.1 934.6,160.8 939.3,161.5 943.9,162.3 948.6,163.1 953.2,164.0 957.9,164.9 962.6,165.9 967.2,166.9 971.9,168.0 976.6,169.1 981.2,170.3 985.9,171.6 990.5,172.9 995.2,174.2 999.9,175.7 1004.5,177.1 1009.2,178.7 1013.8,180.3 1018.5,182.0 1023.2,183.8 1027.8,185.8 1032.5,187.8 1037.1,190.1 1041.8,192.5 1046.5,195.2 1051.1,198.1 1055.8,201.2 1060.5,204.7 1065.1,208.4 1069.8,212.5 1074.4,216.9 1079.1,221.5 1083.8,226.5 1088.4,231.6 1093.1,236.8 1097.7,241.7 1102.4,245.9 1107.1,249.2 1111.7,251.2 1116.4,251.7 1121.1,250.8 1125.7,248.6 1130.4,245.6 1135.0,241.8 1139.7,237.6 1144.4,232.9 1149.0,227.8 1153.7,222.4 1158.3,217.0" stroke="#008000"/>
<polyline points="156.2,401.2 160.8,366.6 165.5,346.5 170.1,332.3 174.8,321.5 179.5,312.8 184.1,305.5 188.8,299.4 193.5,294.1 198.1,289.5 202.8,285.5 207.4,282.0 212.1,278.9 216.8,276.2 221.4,273.8 226.1,271.7 230.7,269.9 235.4,268.4 240.1,267.1 244.7,266.0 249.4,265.2 254.0,264.6 258.7,264.2 263.4,264.0 268.0,264.0 272.7,264.2 277.4,264.7 282.0,265.4 286.7,266.3 291.3,267.4 296.0,268.8 300.7,270.5 305.3,272.5 310.0,274.8 314.6,277.4 319.3,280.5 324.0,284.0 328.6,288.0 333.3,292.7 338.0,298.2 342.6,304.8 347.3,312.6 351.9,322.4 356.6,335.0 361.3,352.6 365.9,381.0 370.6,456.9 375.2,408.6 379.9,364.6 384.6,341.2 389.2,325.2 393.9,313.0 398.5,303.1 403.2,294.9 407.9,287.8 412.5,281.6 417.2,276.1 421.9,271.2 426.5,266.8 431.2,262.8 435.8,259.2 440.5,255.9 445.2,252.9 449.8,250.1 454.5,247.6 459.1,245.3 463.8,243.3 468.5,241.4 473.1,239.8 477.8,238.3 482.5,237.0 487.1,235.9 491.8,234.9 496.4,234.1 501.1,233.5 505.8,233.1 510.4,232.9 515.1,232.8 519.7,232.9 524.4,233.2 529.1,233.7 533.7,234.4 538.4,235.3 543.0,236.4 547.7,237.7 552.4,239.2 557.0,241.0 561.7,243.0 566.4,245.3 571.0,248.0 575.7,251.1 580.3,254.7 585.0,259.0 589.7,264.2 594.3,270.5 599.0,278.2 603.6,287.9 608.3,299.8 613.0,312.0 617.6,315.5 622.3,304.7 627.0,290.3 631.6,277.6 636.3,267.0 640.9,258.0 645.6,250.4 650.3,243.7 654.9,237.8 659.6,232.4 664.2,227.6 668.9,223.1 673.6,219.0 678.2,215.2 682.9,211.6 687.5,208.3 692.2,205.1 696.9,202.1 701.5,199.2 706.2,196.5 710.9,193.9 715.5,191.4 720.2,189.1 724.8,186.8 729.5,184.6 734.2,182.6 738.8,180.6 743.5,178.7 748.1,176.8 752.8,175.1 757.5,173.4 762.1,171.8 766.8,170.3 771.5,168.8 776.1,167.4 780.8,166.1 785.4,164.8 790.1,163.7 794.8,162.5 799.4,161.5 804.1,160.5 808.7,159.6 813.4,158.7 818.1,157.9 822.7,157.2 827.4,156.5 832.0,156.0 836.7,155.4 841.4,155.0 846.0,154.6 850.7,154.3 855.4,154.0 860.0,153.8 864.7,153.6 869.3,153.6 874.0,153.5 878.7,153.5 883.3,153.6 888.0,153.7 892.6,153.9 897.3,154.2 902.0,154.4 906.6,154.8 911.3,155.2 916.0,155.6 920.6,156.1 925.3,156.6 929.9,157.2 934.6,157.9 939.3,158.6 943.9,159.3 948.6,160.1 953.2,160.9 957.9,161.8 962.6,162.8 967.2,163.8 971.9,164.8 976.6,165.9 981.2,167.0 985.9,168.2 990.5,169.4 995.2,170.7 999.9,172.1 1004.5,173.5 1009.2,174.9 1013.8,176.4 1018.5,178.0 1023.2,179.7 1027.8,181.5 1032.5,183.4 1037.1,185.5 1041.8,187.8 1046.5,190.2 1051.1,192.9 1055.8,195.8 1060.5,198.9 1065.1,202.3 1069.8,205.9 1074.4,209.9 1079.1,214.0 1083.8,218.4 1088.4,223.0 1093.1,227.6 1097.7,232.0 1102.4,235.9 1107.1,239.2 1111.7,241.6 1116.4,242.9 1121.1,243.0 1125.7,241.9 1130.4,239.9 1135.0,237.1 1139.7,233.6 1144.4,229.5 1149.0,224.9 1153.7,219.9 1158.3,214.8" stroke="#008080"/>
</g>
<g shape-rendering="crispEdges">
<rect x="85" y="13" width="1065" height="1" fill="#000"/>
<rect x="85" y="13" width="1" height="595" fill="#000"/>
<rect x="85" y="607" width="1065" height="1" fill="#000"/>
<rect x="64" y="21" width="21" height="1" fill="#000"/>
<rect x="75" y="45" width="10" height="1" fill="#000"/>
<rect x="75" y="68" width="10" height="1" fill="#000"/>
<rect x="75" y="91" width="10" height="1" fill="#000"/>
<rect x="75" y="114" width="10" height="1" fill="#000"/>
<rect x="64" y="137" width="21" height="1" fill="#000"/>
<rect x="75" y="160" width="10" height="1" fill="#000"/>
<rect x="75" y="183" width="10" height="1" fill="#000"/>
<rect x="75" y="206" width="10" height="1" fill="#000"/>
<rect x="75" y="229" width="10" height="1" fill="#000"/>
<rect x="64" y="252" width="21" height="1" fill="#000"/>
<rect x="75" y="275" width="10" height="1" fill="#000"/>
<rect x="75" y="298" width="10" height="1" fill="#000"/>
<rect x="75" y="321" width="10" height="1" fill="#000"/>
<rect x="75" y="345" width="10" height="1" fill="#000"/>
<rect x="64" y="368" width="21" height="1" fill="#000"/>
<rect x="75" y="391" width="10" height="1" fill="#000"/>
<rect x="75" y="414" width="10" height="1" fill="#000"/>
<rect x="75" y="437" width="10" height="1" fill="#000"/>
<rect x="75" y="460" width="10" height="1" fill="#000"/>
<rect x="64" y="483" width="21" height="1" fill="#000"/>
<rect x="75" y="506" width="10" height="1" fill="#000"/>
<rect x="75" y="529" width="10" height="1" fill="#000"/>
<rect x="75" y="552" width="10" height="1" fill="#000"/>
<rect x="75" y="575" width="10" height="1" fill="#000"/>
<rect x="64" y="598" width="21" height="1" fill="#000"/>
<rect x="114" y="607" width="1" height="5" fill="#000"/>
<rect x="151" y="607" width="1" height="10" fill="#000"/>
<rect x="188" y="607" width="1" height="5" fill="#000"/>
<rect x="226" y="607" width="1" height="5" fill="#000"/>
<rect x="263" y="607" width="1" height="5" fill="#000"/>
<rect x="300" y="607" width="1" height="5" fill="#000"/>
<rect x="337" y="607" width="1" height="10" fill="#000"/>
<rect x="375" y="607" width="1" height="5" fill="#000"/>
<rect x="412" y="607" width="1" height="5" fill="#000"/>
<rect x="449" y="607" width="1" height="5" fill="#000"/>
<rect x="487" y="607" width="1" height="5" fill="#000"/>
<rect x="524" y="607" width="1" height="10" fill="#000"/>
<rect x="561" y="607" width="1" height="5" fill="#000"/>
<rect x="598" y="607" width="1" height="5" fill="#000"/>
<rect x="636" y="607" width="1" height="5" fill="#000"/>
<rect x="673" y="607" width="1" height="5" fill="#000"/>
<rect x="710" y="607" width="1" height="10" fill="#000"/>
<rect x="748" y="607" width="1" height="5" fill="#000"/>
<rect x="785" y="607" width="1" height="5" fill="#000"/>
<rect x="822" y="607" width="1" height="5" fill="#000"/>
<rect x="860" y="607" width="1" height="5" fill="#000"/>
<rect x="897" y="607" width="1" height="10" fill="#000"/>
<rect x="934" y="607" width="1" height="5" fill="#000"/>
<rect x="971" y="607" width="1" height="5" fill="#000"/>
<rect x="1009" y="607" width="1" height="5" fill="#000"/>
<rect x="1046" y="607" width="1" height="5" fill="#000"/>
<rect x="1083" y="607" width="1" height="10" fill="#000"/>
<rect x="1121" y="607" width="1" height="5" fill="#000"/>
<rect x="85" y="607" width="1" height="10" fill="#000"/>
</g>
<rect x="0" y="608" width="1150" height="50" fill="none"/>
<g><text x="55.5" y="26.2" text-anchor="end">12.50</text><text x="55.5" y="141.7" text-anchor="end">-7.50</text><text x="55.5" y="257.0" text-anchor="end">-27.50</text><text x="55.5" y="372.4" text-anchor="end">-47.50</text><text x="55.5" y="487.8" text-anchor="end">-67.50</text><text x="55.5" y="603.2" text-anchor="end">-87.50</text><text x="84.8" y="627" text-anchor="middle">-0.71</text><text x="151.0" y="627" text-anchor="middle">0.00</text><text x="337.5" y="627" text-anchor="middle">2.00</text><text x="523.9" y="627" text-anchor="middle">4.00</text><text x="710.4" y="627" text-anchor="middle">6.00</text><text x="896.8" y="627" text-anchor="middle">8.00</text><text x="1083.3" y="627" text-anchor="middle">10.00</text>
<text x="743" y="640" text-anchor="middle">Freq [GHz]</text>
<text transform="translate(18.5,312.5) rotate(-90)" text-anchor="middle">dB(S(1,1))</text>
<text x="708.5" y="4" text-anchor="middle" style="font-size:18.67px">XY Plot 1</text>
<text x="1132.3" y="1.9" style="letter-spacing:1.2px">Src1</text>
</g>
<path d="M300.5,222.5 h6 l-3,6 z" fill="#fff" stroke="#000" stroke-width="1.1" stroke-linejoin="miter"/>
<text x="300.3" y="218.8" style="font-size:10.67px">m1</text>
<path d="M487.5,216.5 h6 l-3,6 z" fill="#fff" stroke="#000" stroke-width="1.1" stroke-linejoin="miter"/>
<text x="487.3" y="212.8" style="font-size:10.67px">m2</text>
<path d="M706.5,178.5 h6 l-3,6 z" fill="#fff" stroke="#000" stroke-width="1.1" stroke-linejoin="miter"/>
<text x="706.3" y="174.8" style="font-size:10.67px">m3</text>
<path d="M851.5,143.5 h6 l-3,6 z" fill="#fff" stroke="#000" stroke-width="1.1" stroke-linejoin="miter"/>
<text x="851.3" y="139.8" style="font-size:10.67px">m4</text>
<rect x="0" y="647" width="1150" height="1" fill="#E3E3E3"/>
<rect x="0" y="649" width="1150" height="3" fill="#F0F0F0"/>
<g opacity="0.95">
<path d="M1037,591.3 H1063.3 L1072.8,601.3 H1098.5" fill="none" stroke="#1053A5" stroke-width="1.8"/>
<path d="M1047,598.5 H1059.7 L1069.8,608.7 H1112.4 L1116,604.5" fill="none" stroke="#1053A5" stroke-width="1.8"/>
<g fill="#fff" stroke="#F0A02C" stroke-width="2.6">
<circle cx="1033.5" cy="591.3" r="3.1"/><circle cx="1043.4" cy="599.3" r="3.1"/><circle cx="1102.5" cy="601.4" r="3.1"/><circle cx="1118.4" cy="601.4" r="3.1"/>
</g>
<text x="1022.5" y="641.2" textLength="112" lengthAdjust="spacingAndGlyphs" style="fill:#1053A5;font-size:29.3px;stroke:#1053A5;stroke-width:0.45px" opacity="0.93">EDA365</text>
</g>
</svg>
<div class="mkw"><table class="mk">
<colgroup><col style="width:52px"><col style="width:41px"><col style="width:51px"></colgroup>
<tr><td>Name</td><td>X</td><td>Y</td></tr>
<tr><td>m1</td><td>1.6500</td><td>-23.6273</td></tr>
<tr><td>m2</td><td>3.6500</td><td>-22.4296</td></tr>
<tr><td>m3</td><td>6.0000</td><td>-15.8714</td></tr>
<tr><td>m4</td><td>7.5500</td><td>-9.8822</td></tr>
</table></div>
</body></html>
